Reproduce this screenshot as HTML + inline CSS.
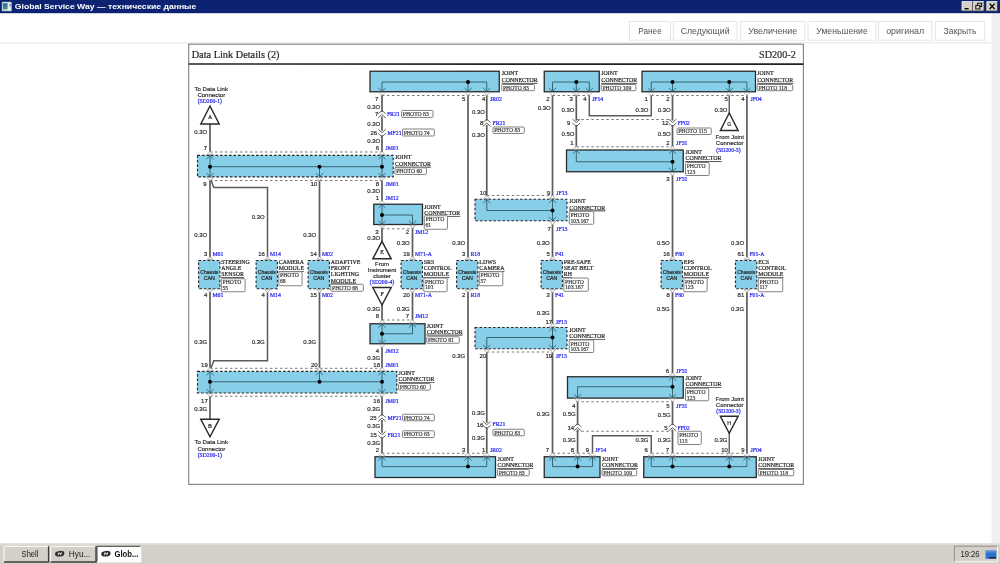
<!DOCTYPE html><html><head><meta charset="utf-8"><title>Global Service Way</title>
<style>html,body{margin:0;padding:0;background:#fff;overflow:hidden}svg{display:block}text{white-space:pre}</style></head><body>
<svg width="1000" height="564" viewBox="0 0 1000 564">
<defs><filter id="soft" filterUnits="userSpaceOnUse" x="150" y="30" width="700" height="480"><feGaussianBlur stdDeviation="0.38"/></filter><filter id="soft2" filterUnits="userSpaceOnUse" x="-20" y="-20" width="1040" height="604"><feGaussianBlur stdDeviation="0.3"/></filter></defs>
<g filter="url(#soft2)">
<rect x="-10" y="-10" width="1020" height="584" fill="#fff"/>
<rect x="991.6" y="13" width="18.4" height="530" fill="#f0f0f0"/>
<rect x="-10" y="-10" width="1020" height="23.2" fill="#0b2470"/>
<rect x="2" y="2" width="9.5" height="9" fill="#e8ece8" stroke="#8aa" stroke-width="0.5"/>
<defs><linearGradient id="ig" x1="0" y1="0" x2="0" y2="1"><stop offset="0" stop-color="#3a62b8"/><stop offset="1" stop-color="#3f9a78"/></linearGradient></defs>
<rect x="2.8" y="3.2" width="4.8" height="6.2" fill="url(#ig)"/>
<rect x="9.6" y="4" width="1" height="2.4" fill="#3a62b8"/>
<text x="14.8" y="9.0" font-family="Liberation Sans" font-size="7.6" font-weight="bold" fill="#fff" textLength="181.5" lengthAdjust="spacingAndGlyphs">Global Service Way — технические данные</text>
<rect x="962" y="1.5" width="10.6" height="9.5" fill="#d4d0c8"/>
<path d="M962,11 L962,1.5 L972.6,1.5" fill="none" stroke="#fff" stroke-width="0.7"/>
<path d="M962,11 L972.6,11 L972.6,1.5" fill="none" stroke="#404040" stroke-width="0.8"/>
<rect x="964.6" y="8" width="4" height="1.4" fill="#000"/>
<rect x="973.4" y="1.5" width="10.6" height="9.5" fill="#d4d0c8"/>
<path d="M973.4,11 L973.4,1.5 L984.0,1.5" fill="none" stroke="#fff" stroke-width="0.7"/>
<path d="M973.4,11 L984.0,11 L984.0,1.5" fill="none" stroke="#404040" stroke-width="0.8"/>
<rect x="977.6" y="3.2" width="4" height="3.4" fill="none" stroke="#000" stroke-width="0.9"/>
<rect x="975.8" y="5.4" width="4" height="3.6" fill="#d4d0c8" stroke="#000" stroke-width="0.9"/>
<rect x="986.8" y="1.5" width="10.6" height="9.5" fill="#d4d0c8"/>
<path d="M986.8,11 L986.8,1.5 L997.4,1.5" fill="none" stroke="#fff" stroke-width="0.7"/>
<path d="M986.8,11 L997.4,11 L997.4,1.5" fill="none" stroke="#404040" stroke-width="0.8"/>
<path d="M989.5999999999999,3.6 L994.5999999999999,9 M994.5999999999999,3.6 L989.5999999999999,9" stroke="#000" stroke-width="1.3"/>
<line x1="-10" y1="42.9" x2="991.6" y2="42.9" stroke="#e3e3e3" stroke-width="1"/>
<rect x="629.5" y="21.6" width="41.0" height="18.6" fill="#fff" stroke="#e2e2e2" stroke-width="0.9"/>
<text x="638.3" y="33.9" font-family="Liberation Sans" font-size="9.3" fill="#555" textLength="23.4" lengthAdjust="spacingAndGlyphs">Ранее</text>
<rect x="673.2" y="21.6" width="63.799999999999955" height="18.6" fill="#fff" stroke="#e2e2e2" stroke-width="0.9"/>
<text x="680.7" y="33.9" font-family="Liberation Sans" font-size="9.3" fill="#555" textLength="48.8" lengthAdjust="spacingAndGlyphs">Следующий</text>
<rect x="740.5" y="21.6" width="64.5" height="18.6" fill="#fff" stroke="#e2e2e2" stroke-width="0.9"/>
<text x="748.35" y="33.9" font-family="Liberation Sans" font-size="9.3" fill="#555" textLength="48.8" lengthAdjust="spacingAndGlyphs">Увеличение</text>
<rect x="808.0" y="21.6" width="68.0" height="18.6" fill="#fff" stroke="#e2e2e2" stroke-width="0.9"/>
<text x="816.3" y="33.9" font-family="Liberation Sans" font-size="9.3" fill="#555" textLength="51.4" lengthAdjust="spacingAndGlyphs">Уменьшение</text>
<rect x="878.6" y="21.6" width="53.19999999999993" height="18.6" fill="#fff" stroke="#e2e2e2" stroke-width="0.9"/>
<text x="886.2" y="33.9" font-family="Liberation Sans" font-size="9.3" fill="#555" textLength="38.0" lengthAdjust="spacingAndGlyphs">оригинал</text>
<rect x="935.2" y="21.6" width="49.5" height="18.6" fill="#fff" stroke="#e2e2e2" stroke-width="0.9"/>
<text x="943.5500000000001" y="33.9" font-family="Liberation Sans" font-size="9.3" fill="#555" textLength="32.8" lengthAdjust="spacingAndGlyphs">Закрыть</text>
<rect x="188.7" y="44.2" width="614.7" height="440.15000000000003" fill="#fff" stroke="#808080" stroke-width="1.1"/>
<line x1="188.7" y1="64.0" x2="803.4" y2="64.1" stroke="#222" stroke-width="1.7"/>
<text x="191.7" y="57.6" font-family="Liberation Serif" font-size="10.3" text-anchor="start" fill="#2a2a2a" font-weight="normal" stroke="#2a2a2a" stroke-width="0.22">Data Link Details (2)</text>
<text x="795.8" y="58.2" font-family="Liberation Serif" font-size="10.2" text-anchor="end" fill="#333" font-weight="normal" stroke="#333" stroke-width="0.22">SD200-2</text>
</g>
<g id="diagram" filter="url(#soft)">
<polyline points="210,124 210,155.5" fill="none" stroke="#5c5c5c" stroke-width="1.7" stroke-linejoin="miter"/>
<polyline points="210,177 210,260.5" fill="none" stroke="#5c5c5c" stroke-width="1.7" stroke-linejoin="miter"/>
<polyline points="210,288.75 210,371.25" fill="none" stroke="#5c5c5c" stroke-width="1.7" stroke-linejoin="miter"/>
<polyline points="210,393 210,419.5" fill="none" stroke="#5c5c5c" stroke-width="1.7" stroke-linejoin="miter"/>
<polyline points="210.3,178.2 213.75,187.5 267.5,187.5 267.5,260.5" fill="none" stroke="#5c5c5c" stroke-width="1.5" stroke-linejoin="miter"/>
<polyline points="267.5,288.75 267.5,360.75 213.75,360.75 210.3,370.0" fill="none" stroke="#5c5c5c" stroke-width="1.5" stroke-linejoin="miter"/>
<polyline points="319.5,177 319.5,260.5" fill="none" stroke="#5c5c5c" stroke-width="1.7" stroke-linejoin="miter"/>
<polyline points="319.5,288.75 319.5,371.25" fill="none" stroke="#5c5c5c" stroke-width="1.7" stroke-linejoin="miter"/>
<polyline points="382,91.75 382,155.5" fill="none" stroke="#5c5c5c" stroke-width="1.7" stroke-linejoin="miter"/>
<polyline points="382,177 382,204.25" fill="none" stroke="#5c5c5c" stroke-width="1.7" stroke-linejoin="miter"/>
<polyline points="382,224.5 382,241.5" fill="none" stroke="#5c5c5c" stroke-width="1.7" stroke-linejoin="miter"/>
<polyline points="382,305 382,323.75" fill="none" stroke="#5c5c5c" stroke-width="1.7" stroke-linejoin="miter"/>
<polyline points="382,343.75 382,371.25" fill="none" stroke="#5c5c5c" stroke-width="1.7" stroke-linejoin="miter"/>
<polyline points="382,393 382,456.75" fill="none" stroke="#5c5c5c" stroke-width="1.7" stroke-linejoin="miter"/>
<polyline points="412.5,224.5 412.5,260.5" fill="none" stroke="#5c5c5c" stroke-width="1.7" stroke-linejoin="miter"/>
<polyline points="412.5,288.75 412.5,323.75" fill="none" stroke="#5c5c5c" stroke-width="1.7" stroke-linejoin="miter"/>
<polyline points="468,91.75 468,260.5" fill="none" stroke="#5c5c5c" stroke-width="1.7" stroke-linejoin="miter"/>
<polyline points="468,288.75 468,456.75" fill="none" stroke="#5c5c5c" stroke-width="1.7" stroke-linejoin="miter"/>
<polyline points="486.75,91.75 486.75,199.25" fill="none" stroke="#5c5c5c" stroke-width="1.7" stroke-linejoin="miter"/>
<polyline points="486.75,348.75 486.75,456.75" fill="none" stroke="#5c5c5c" stroke-width="1.7" stroke-linejoin="miter"/>
<polyline points="552.5,91.75 552.5,199.25" fill="none" stroke="#5c5c5c" stroke-width="1.7" stroke-linejoin="miter"/>
<polyline points="552.5,220.75 552.5,260.5" fill="none" stroke="#5c5c5c" stroke-width="1.7" stroke-linejoin="miter"/>
<polyline points="552.5,288.75 552.5,327.5" fill="none" stroke="#5c5c5c" stroke-width="1.7" stroke-linejoin="miter"/>
<polyline points="552.5,348.75 552.5,456.75" fill="none" stroke="#5c5c5c" stroke-width="1.7" stroke-linejoin="miter"/>
<polyline points="576.3,91.75 576.3,150" fill="none" stroke="#5c5c5c" stroke-width="1.7" stroke-linejoin="miter"/>
<polyline points="577.5999999999999,398 577.5999999999999,456.75" fill="none" stroke="#5c5c5c" stroke-width="1.7" stroke-linejoin="miter"/>
<polyline points="589.3,91.75 589.3,115.75 651.25,115.75 651.25,91.75" fill="none" stroke="#5c5c5c" stroke-width="1.5" stroke-linejoin="miter"/>
<polyline points="592.5,456.75 592.5,435.75 651.25,435.75 651.25,456.75" fill="none" stroke="#5c5c5c" stroke-width="1.5" stroke-linejoin="miter"/>
<polyline points="672.5,91.75 672.5,150" fill="none" stroke="#5c5c5c" stroke-width="1.7" stroke-linejoin="miter"/>
<polyline points="672.5,171.75 672.5,260.5" fill="none" stroke="#5c5c5c" stroke-width="1.7" stroke-linejoin="miter"/>
<polyline points="672.5,288.75 672.5,376.75" fill="none" stroke="#5c5c5c" stroke-width="1.7" stroke-linejoin="miter"/>
<polyline points="672.5,398 672.5,456.75" fill="none" stroke="#5c5c5c" stroke-width="1.7" stroke-linejoin="miter"/>
<polyline points="729.25,91.75 729.25,113.5" fill="none" stroke="#5c5c5c" stroke-width="1.4" stroke-linejoin="miter"/>
<polyline points="729.25,433 729.25,456.75" fill="none" stroke="#5c5c5c" stroke-width="1.4" stroke-linejoin="miter"/>
<polyline points="746.9,91.75 746.9,260.5" fill="none" stroke="#5c5c5c" stroke-width="1.7" stroke-linejoin="miter"/>
<polyline points="746.9,288.75 746.9,456.75" fill="none" stroke="#5c5c5c" stroke-width="1.7" stroke-linejoin="miter"/>
<line x1="382" y1="95.5" x2="486.75" y2="95.5" stroke="#6a6a6a" stroke-width="0.9" stroke-dasharray="2.5 2.5"/>
<line x1="552.5" y1="95.5" x2="590.5" y2="95.5" stroke="#6a6a6a" stroke-width="0.9" stroke-dasharray="2.5 2.5"/>
<line x1="651.25" y1="95.5" x2="746.9" y2="95.5" stroke="#6a6a6a" stroke-width="0.9" stroke-dasharray="2.5 2.5"/>
<line x1="576.3" y1="119.5" x2="672.5" y2="119.5" stroke="#6a6a6a" stroke-width="0.9" stroke-dasharray="2.5 2.5"/>
<line x1="576.3" y1="146.75" x2="672.5" y2="146.75" stroke="#6a6a6a" stroke-width="0.9" stroke-dasharray="2.5 2.5"/>
<line x1="210" y1="152.0" x2="382" y2="152.0" stroke="#6a6a6a" stroke-width="0.9" stroke-dasharray="2.5 2.5"/>
<line x1="210" y1="180.5" x2="382" y2="180.5" stroke="#6a6a6a" stroke-width="0.9" stroke-dasharray="2.5 2.5"/>
<line x1="486.75" y1="195.5" x2="552.5" y2="195.5" stroke="#6a6a6a" stroke-width="0.9" stroke-dasharray="2.5 2.5"/>
<line x1="382" y1="228.75" x2="412.5" y2="228.75" stroke="#6a6a6a" stroke-width="0.9" stroke-dasharray="2.5 2.5"/>
<line x1="382" y1="320.0" x2="412.5" y2="320.0" stroke="#6a6a6a" stroke-width="0.9" stroke-dasharray="2.5 2.5"/>
<line x1="486.75" y1="352.0" x2="552.5" y2="352.0" stroke="#6a6a6a" stroke-width="0.9" stroke-dasharray="2.5 2.5"/>
<line x1="210" y1="368.3" x2="382" y2="368.3" stroke="#6a6a6a" stroke-width="0.9" stroke-dasharray="2.5 2.5"/>
<line x1="210" y1="396.25" x2="382" y2="396.25" stroke="#6a6a6a" stroke-width="0.9" stroke-dasharray="2.5 2.5"/>
<line x1="576.3" y1="401.75" x2="672.5" y2="401.75" stroke="#6a6a6a" stroke-width="0.9" stroke-dasharray="2.5 2.5"/>
<line x1="576.3" y1="431.25" x2="672.5" y2="431.25" stroke="#6a6a6a" stroke-width="0.9" stroke-dasharray="2.5 2.5"/>
<line x1="382" y1="453.25" x2="486.75" y2="453.25" stroke="#6a6a6a" stroke-width="0.9" stroke-dasharray="2.5 2.5"/>
<line x1="552.5" y1="453.25" x2="592.5" y2="453.25" stroke="#6a6a6a" stroke-width="0.9" stroke-dasharray="2.5 2.5"/>
<line x1="651.25" y1="453.25" x2="746.9" y2="453.25" stroke="#6a6a6a" stroke-width="0.9" stroke-dasharray="2.5 2.5"/>
<rect x="370" y="71.25" width="129.25" height="20.5" fill="#87cee9" stroke="#2a2a2a" stroke-width="1.3"/>
<polyline points="382,91.75 382,82 486.75,82 486.75,91.75" fill="none" stroke="#2f5a68" stroke-width="0.9"/>
<polyline points="468,82 468,91.75" fill="none" stroke="#2f5a68" stroke-width="0.9"/>
<circle cx="468" cy="82" r="2.0" fill="#000"/>
<path d="M378.4,87.95 L382,91.45 L385.6,87.95" fill="none" stroke="#2f5a68" stroke-width="0.8"/>
<path d="M378.8,92.45 L382,95.55 L385.2,92.45 Z" fill="#fff" stroke="#999" stroke-width="0.7"/>
<path d="M464.4,87.95 L468,91.45 L471.6,87.95" fill="none" stroke="#2f5a68" stroke-width="0.8"/>
<path d="M464.8,92.45 L468,95.55 L471.2,92.45 Z" fill="#fff" stroke="#999" stroke-width="0.7"/>
<path d="M483.15,87.95 L486.75,91.45 L490.35,87.95" fill="none" stroke="#2f5a68" stroke-width="0.8"/>
<path d="M483.55,92.45 L486.75,95.55 L489.95,92.45 Z" fill="#fff" stroke="#999" stroke-width="0.7"/>
<rect x="544.25" y="71.25" width="55.0" height="20.5" fill="#87cee9" stroke="#2a2a2a" stroke-width="1.3"/>
<polyline points="552.5,91.75 552.5,82 589.3,82 589.3,91.75" fill="none" stroke="#2f5a68" stroke-width="0.9"/>
<polyline points="576.3,82 576.3,91.75" fill="none" stroke="#2f5a68" stroke-width="0.9"/>
<circle cx="576.3" cy="82" r="2.0" fill="#000"/>
<path d="M548.9,87.95 L552.5,91.45 L556.1,87.95" fill="none" stroke="#2f5a68" stroke-width="0.8"/>
<path d="M549.3,92.45 L552.5,95.55 L555.7,92.45 Z" fill="#fff" stroke="#999" stroke-width="0.7"/>
<path d="M572.6999999999999,87.95 L576.3,91.45 L579.9,87.95" fill="none" stroke="#2f5a68" stroke-width="0.8"/>
<path d="M573.0999999999999,92.45 L576.3,95.55 L579.5,92.45 Z" fill="#fff" stroke="#999" stroke-width="0.7"/>
<path d="M585.6999999999999,87.95 L589.3,91.45 L592.9,87.95" fill="none" stroke="#2f5a68" stroke-width="0.8"/>
<path d="M586.0999999999999,92.45 L589.3,95.55 L592.5,92.45 Z" fill="#fff" stroke="#999" stroke-width="0.7"/>
<rect x="642" y="71.25" width="113.5" height="20.5" fill="#87cee9" stroke="#2a2a2a" stroke-width="1.3"/>
<polyline points="651.25,91.75 651.25,82 746.9,82 746.9,91.75" fill="none" stroke="#2f5a68" stroke-width="0.9"/>
<polyline points="672.5,82 672.5,91.75" fill="none" stroke="#2f5a68" stroke-width="0.9"/>
<polyline points="729.25,82 729.25,91.75" fill="none" stroke="#2f5a68" stroke-width="0.9"/>
<circle cx="672.5" cy="82" r="2.0" fill="#000"/>
<circle cx="729.25" cy="82" r="2.0" fill="#000"/>
<path d="M647.65,87.95 L651.25,91.45 L654.85,87.95" fill="none" stroke="#2f5a68" stroke-width="0.8"/>
<path d="M648.05,92.45 L651.25,95.55 L654.45,92.45 Z" fill="#fff" stroke="#999" stroke-width="0.7"/>
<path d="M668.9,87.95 L672.5,91.45 L676.1,87.95" fill="none" stroke="#2f5a68" stroke-width="0.8"/>
<path d="M669.3,92.45 L672.5,95.55 L675.7,92.45 Z" fill="#fff" stroke="#999" stroke-width="0.7"/>
<path d="M725.65,87.95 L729.25,91.45 L732.85,87.95" fill="none" stroke="#2f5a68" stroke-width="0.8"/>
<path d="M726.05,92.45 L729.25,95.55 L732.45,92.45 Z" fill="#fff" stroke="#999" stroke-width="0.7"/>
<path d="M743.3,87.95 L746.9,91.45 L750.5,87.95" fill="none" stroke="#2f5a68" stroke-width="0.8"/>
<path d="M743.6999999999999,92.45 L746.9,95.55 L750.1,92.45 Z" fill="#fff" stroke="#999" stroke-width="0.7"/>
<rect x="375" y="456.75" width="120.5" height="20.75" fill="#87cee9" stroke="#2a2a2a" stroke-width="1.3"/>
<polyline points="382,456.75 382,466.6 486.75,466.6 486.75,456.75" fill="none" stroke="#2f5a68" stroke-width="0.9"/>
<polyline points="468,466.6 468,456.75" fill="none" stroke="#2f5a68" stroke-width="0.9"/>
<circle cx="468" cy="466.6" r="2.0" fill="#000"/>
<path d="M378.4,460.55 L382,457.05 L385.6,460.55" fill="none" stroke="#2f5a68" stroke-width="0.8"/>
<path d="M378.8,456.05 L382,452.95 L385.2,456.05 Z" fill="#fff" stroke="#999" stroke-width="0.7"/>
<path d="M464.4,460.55 L468,457.05 L471.6,460.55" fill="none" stroke="#2f5a68" stroke-width="0.8"/>
<path d="M464.8,456.05 L468,452.95 L471.2,456.05 Z" fill="#fff" stroke="#999" stroke-width="0.7"/>
<path d="M483.15,460.55 L486.75,457.05 L490.35,460.55" fill="none" stroke="#2f5a68" stroke-width="0.8"/>
<path d="M483.55,456.05 L486.75,452.95 L489.95,456.05 Z" fill="#fff" stroke="#999" stroke-width="0.7"/>
<rect x="544.25" y="456.75" width="55.75" height="20.75" fill="#87cee9" stroke="#2a2a2a" stroke-width="1.3"/>
<polyline points="552.5,456.75 552.5,466.6 592.5,466.6 592.5,456.75" fill="none" stroke="#2f5a68" stroke-width="0.9"/>
<polyline points="577.5999999999999,466.6 577.5999999999999,456.75" fill="none" stroke="#2f5a68" stroke-width="0.9"/>
<circle cx="577.5999999999999" cy="466.6" r="2.0" fill="#000"/>
<path d="M548.9,460.55 L552.5,457.05 L556.1,460.55" fill="none" stroke="#2f5a68" stroke-width="0.8"/>
<path d="M549.3,456.05 L552.5,452.95 L555.7,456.05 Z" fill="#fff" stroke="#999" stroke-width="0.7"/>
<path d="M573.9999999999999,460.55 L577.5999999999999,457.05 L581.1999999999999,460.55" fill="none" stroke="#2f5a68" stroke-width="0.8"/>
<path d="M574.3999999999999,456.05 L577.5999999999999,452.95 L580.8,456.05 Z" fill="#fff" stroke="#999" stroke-width="0.7"/>
<path d="M588.9,460.55 L592.5,457.05 L596.1,460.55" fill="none" stroke="#2f5a68" stroke-width="0.8"/>
<path d="M589.3,456.05 L592.5,452.95 L595.7,456.05 Z" fill="#fff" stroke="#999" stroke-width="0.7"/>
<rect x="643.75" y="456.75" width="112.5" height="20.75" fill="#87cee9" stroke="#2a2a2a" stroke-width="1.3"/>
<polyline points="651.25,456.75 651.25,466.6 746.9,466.6 746.9,456.75" fill="none" stroke="#2f5a68" stroke-width="0.9"/>
<polyline points="672.5,466.6 672.5,456.75" fill="none" stroke="#2f5a68" stroke-width="0.9"/>
<polyline points="729.25,466.6 729.25,456.75" fill="none" stroke="#2f5a68" stroke-width="0.9"/>
<circle cx="672.5" cy="466.6" r="2.0" fill="#000"/>
<circle cx="729.25" cy="466.6" r="2.0" fill="#000"/>
<path d="M647.65,460.55 L651.25,457.05 L654.85,460.55" fill="none" stroke="#2f5a68" stroke-width="0.8"/>
<path d="M648.05,456.05 L651.25,452.95 L654.45,456.05 Z" fill="#fff" stroke="#999" stroke-width="0.7"/>
<path d="M668.9,460.55 L672.5,457.05 L676.1,460.55" fill="none" stroke="#2f5a68" stroke-width="0.8"/>
<path d="M669.3,456.05 L672.5,452.95 L675.7,456.05 Z" fill="#fff" stroke="#999" stroke-width="0.7"/>
<path d="M725.65,460.55 L729.25,457.05 L732.85,460.55" fill="none" stroke="#2f5a68" stroke-width="0.8"/>
<path d="M726.05,456.05 L729.25,452.95 L732.45,456.05 Z" fill="#fff" stroke="#999" stroke-width="0.7"/>
<path d="M743.3,460.55 L746.9,457.05 L750.5,460.55" fill="none" stroke="#2f5a68" stroke-width="0.8"/>
<path d="M743.6999999999999,456.05 L746.9,452.95 L750.1,456.05 Z" fill="#fff" stroke="#999" stroke-width="0.7"/>
<rect x="197.5" y="155.3" width="195.7" height="21.599999999999994" fill="#87cee9" stroke="#2a2a2a" stroke-width="1.15" stroke-dasharray="2.6 1.9"/>
<polyline points="210,166.7 382,166.7" fill="none" stroke="#2f5a68" stroke-width="0.9"/>
<polyline points="210,155.3 210,176.9" fill="none" stroke="#2f5a68" stroke-width="0.9"/>
<polyline points="382,155.3 382,176.9" fill="none" stroke="#2f5a68" stroke-width="0.9"/>
<polyline points="319.5,166.7 319.5,176.9" fill="none" stroke="#2f5a68" stroke-width="0.9"/>
<path d="M315.9,173.1 L319.5,176.6 L323.1,173.1" fill="none" stroke="#2f5a68" stroke-width="0.8"/>
<path d="M316.3,177.6 L319.5,180.70000000000002 L322.7,177.6 Z" fill="#fff" stroke="#999" stroke-width="0.7"/>
<circle cx="210" cy="166.7" r="2.0" fill="#000"/>
<circle cx="319.5" cy="166.7" r="2.0" fill="#000"/>
<circle cx="382" cy="166.7" r="2.0" fill="#000"/>
<path d="M206.4,159.10000000000002 L210,155.60000000000002 L213.6,159.10000000000002" fill="none" stroke="#2f5a68" stroke-width="0.8"/>
<path d="M206.8,154.60000000000002 L210,151.5 L213.2,154.60000000000002 Z" fill="#fff" stroke="#999" stroke-width="0.7"/>
<path d="M378.4,159.10000000000002 L382,155.60000000000002 L385.6,159.10000000000002" fill="none" stroke="#2f5a68" stroke-width="0.8"/>
<path d="M378.8,154.60000000000002 L382,151.5 L385.2,154.60000000000002 Z" fill="#fff" stroke="#999" stroke-width="0.7"/>
<path d="M206.4,173.1 L210,176.6 L213.6,173.1" fill="none" stroke="#2f5a68" stroke-width="0.8"/>
<path d="M206.8,177.6 L210,180.70000000000002 L213.2,177.6 Z" fill="#fff" stroke="#999" stroke-width="0.7"/>
<path d="M378.4,173.1 L382,176.6 L385.6,173.1" fill="none" stroke="#2f5a68" stroke-width="0.8"/>
<path d="M378.8,177.6 L382,180.70000000000002 L385.2,177.6 Z" fill="#fff" stroke="#999" stroke-width="0.7"/>
<rect x="197.5" y="371.4" width="199.3" height="21.600000000000023" fill="#87cee9" stroke="#2a2a2a" stroke-width="1.15" stroke-dasharray="2.6 1.9"/>
<polyline points="210,381.8 382,381.8" fill="none" stroke="#2f5a68" stroke-width="0.9"/>
<polyline points="210,371.4 210,393.0" fill="none" stroke="#2f5a68" stroke-width="0.9"/>
<polyline points="382,371.4 382,393.0" fill="none" stroke="#2f5a68" stroke-width="0.9"/>
<polyline points="319.5,371.4 319.5,381.8" fill="none" stroke="#2f5a68" stroke-width="0.9"/>
<path d="M315.9,375.2 L319.5,371.7 L323.1,375.2" fill="none" stroke="#2f5a68" stroke-width="0.8"/>
<path d="M316.3,370.7 L319.5,367.59999999999997 L322.7,370.7 Z" fill="#fff" stroke="#999" stroke-width="0.7"/>
<circle cx="210" cy="381.8" r="2.0" fill="#000"/>
<circle cx="319.5" cy="381.8" r="2.0" fill="#000"/>
<circle cx="382" cy="381.8" r="2.0" fill="#000"/>
<path d="M206.4,375.2 L210,371.7 L213.6,375.2" fill="none" stroke="#2f5a68" stroke-width="0.8"/>
<path d="M206.8,370.7 L210,367.59999999999997 L213.2,370.7 Z" fill="#fff" stroke="#999" stroke-width="0.7"/>
<path d="M378.4,375.2 L382,371.7 L385.6,375.2" fill="none" stroke="#2f5a68" stroke-width="0.8"/>
<path d="M378.8,370.7 L382,367.59999999999997 L385.2,370.7 Z" fill="#fff" stroke="#999" stroke-width="0.7"/>
<path d="M206.4,389.2 L210,392.7 L213.6,389.2" fill="none" stroke="#2f5a68" stroke-width="0.8"/>
<path d="M206.8,393.7 L210,396.8 L213.2,393.7 Z" fill="#fff" stroke="#999" stroke-width="0.7"/>
<path d="M378.4,389.2 L382,392.7 L385.6,389.2" fill="none" stroke="#2f5a68" stroke-width="0.8"/>
<path d="M378.8,393.7 L382,396.8 L385.2,393.7 Z" fill="#fff" stroke="#999" stroke-width="0.7"/>
<rect x="373.75" y="204.25" width="48.75" height="20.25" fill="#87cee9" stroke="#2a2a2a" stroke-width="1.3"/>
<polyline points="382,204.25 382,224.5" fill="none" stroke="#2f5a68" stroke-width="0.9"/>
<polyline points="382,215 412.5,215 412.5,224.5" fill="none" stroke="#2f5a68" stroke-width="0.9"/>
<circle cx="382" cy="215" r="2.0" fill="#000"/>
<path d="M378.4,208.05 L382,204.55 L385.6,208.05" fill="none" stroke="#2f5a68" stroke-width="0.8"/>
<path d="M378.8,203.55 L382,200.45 L385.2,203.55 Z" fill="#fff" stroke="#999" stroke-width="0.7"/>
<path d="M378.4,220.7 L382,224.2 L385.6,220.7" fill="none" stroke="#2f5a68" stroke-width="0.8"/>
<path d="M378.8,225.2 L382,228.3 L385.2,225.2 Z" fill="#fff" stroke="#999" stroke-width="0.7"/>
<path d="M408.9,220.7 L412.5,224.2 L416.1,220.7" fill="none" stroke="#2f5a68" stroke-width="0.8"/>
<path d="M409.3,225.2 L412.5,228.3 L415.7,225.2 Z" fill="#fff" stroke="#999" stroke-width="0.7"/>
<rect x="370" y="323.75" width="55" height="20.0" fill="#87cee9" stroke="#2a2a2a" stroke-width="1.3"/>
<polyline points="382,323.75 382,343.75" fill="none" stroke="#2f5a68" stroke-width="0.9"/>
<polyline points="382,333.75 412.5,333.75 412.5,323.75" fill="none" stroke="#2f5a68" stroke-width="0.9"/>
<circle cx="382" cy="333.75" r="2.0" fill="#000"/>
<path d="M378.4,327.55 L382,324.05 L385.6,327.55" fill="none" stroke="#2f5a68" stroke-width="0.8"/>
<path d="M378.8,323.05 L382,319.95 L385.2,323.05 Z" fill="#fff" stroke="#999" stroke-width="0.7"/>
<path d="M378.4,339.95 L382,343.45 L385.6,339.95" fill="none" stroke="#2f5a68" stroke-width="0.8"/>
<path d="M378.8,344.45 L382,347.55 L385.2,344.45 Z" fill="#fff" stroke="#999" stroke-width="0.7"/>
<path d="M408.9,327.55 L412.5,324.05 L416.1,327.55" fill="none" stroke="#2f5a68" stroke-width="0.8"/>
<path d="M409.3,323.05 L412.5,319.95 L415.7,323.05 Z" fill="#fff" stroke="#999" stroke-width="0.7"/>
<rect x="475" y="199.25" width="92" height="21.5" fill="#87cee9" stroke="#2a2a2a" stroke-width="1.15" stroke-dasharray="2.6 1.9"/>
<polyline points="486.75,199.25 486.75,210.5 552.5,210.5" fill="none" stroke="#2f5a68" stroke-width="0.9"/>
<polyline points="552.5,199.25 552.5,220.75" fill="none" stroke="#2f5a68" stroke-width="0.9"/>
<circle cx="552.5" cy="210.6" r="2.0" fill="#000"/>
<path d="M483.15,203.05 L486.75,199.55 L490.35,203.05" fill="none" stroke="#2f5a68" stroke-width="0.8"/>
<path d="M483.55,198.55 L486.75,195.45 L489.95,198.55 Z" fill="#fff" stroke="#999" stroke-width="0.7"/>
<path d="M548.9,203.05 L552.5,199.55 L556.1,203.05" fill="none" stroke="#2f5a68" stroke-width="0.8"/>
<path d="M549.3,198.55 L552.5,195.45 L555.7,198.55 Z" fill="#fff" stroke="#999" stroke-width="0.7"/>
<path d="M548.9,216.95 L552.5,220.45 L556.1,216.95" fill="none" stroke="#2f5a68" stroke-width="0.8"/>
<path d="M549.3,221.45 L552.5,224.55 L555.7,221.45 Z" fill="#fff" stroke="#999" stroke-width="0.7"/>
<rect x="475" y="327.5" width="92" height="21.25" fill="#87cee9" stroke="#2a2a2a" stroke-width="1.15" stroke-dasharray="2.6 1.9"/>
<polyline points="486.75,348.75 486.75,337.5 552.5,337.5" fill="none" stroke="#2f5a68" stroke-width="0.9"/>
<polyline points="552.5,327.5 552.5,348.75" fill="none" stroke="#2f5a68" stroke-width="0.9"/>
<circle cx="552.5" cy="337.5" r="2.0" fill="#000"/>
<path d="M483.15,344.95 L486.75,348.45 L490.35,344.95" fill="none" stroke="#2f5a68" stroke-width="0.8"/>
<path d="M483.55,349.45 L486.75,352.55 L489.95,349.45 Z" fill="#fff" stroke="#999" stroke-width="0.7"/>
<path d="M548.9,344.95 L552.5,348.45 L556.1,344.95" fill="none" stroke="#2f5a68" stroke-width="0.8"/>
<path d="M549.3,349.45 L552.5,352.55 L555.7,349.45 Z" fill="#fff" stroke="#999" stroke-width="0.7"/>
<path d="M548.9,331.3 L552.5,327.8 L556.1,331.3" fill="none" stroke="#2f5a68" stroke-width="0.8"/>
<path d="M549.3,326.8 L552.5,323.7 L555.7,326.8 Z" fill="#fff" stroke="#999" stroke-width="0.7"/>
<rect x="566.5" y="150" width="116.75" height="21.75" fill="#87cee9" stroke="#2a2a2a" stroke-width="1.3"/>
<polyline points="576.3,150 576.3,161.75 672.5,161.75" fill="none" stroke="#2f5a68" stroke-width="0.9"/>
<polyline points="672.5,150 672.5,171.75" fill="none" stroke="#2f5a68" stroke-width="0.9"/>
<circle cx="672.5" cy="161.75" r="2.0" fill="#000"/>
<path d="M572.6999999999999,153.8 L576.3,150.3 L579.9,153.8" fill="none" stroke="#2f5a68" stroke-width="0.8"/>
<path d="M573.0999999999999,149.3 L576.3,146.2 L579.5,149.3 Z" fill="#fff" stroke="#999" stroke-width="0.7"/>
<path d="M668.9,153.8 L672.5,150.3 L676.1,153.8" fill="none" stroke="#2f5a68" stroke-width="0.8"/>
<path d="M669.3,149.3 L672.5,146.2 L675.7,149.3 Z" fill="#fff" stroke="#999" stroke-width="0.7"/>
<path d="M668.9,167.95 L672.5,171.45 L676.1,167.95" fill="none" stroke="#2f5a68" stroke-width="0.8"/>
<path d="M669.3,172.45 L672.5,175.55 L675.7,172.45 Z" fill="#fff" stroke="#999" stroke-width="0.7"/>
<rect x="567.5" y="376.75" width="115.75" height="21.350000000000023" fill="#87cee9" stroke="#2a2a2a" stroke-width="1.3"/>
<polyline points="577.5999999999999,398 577.5999999999999,386.75 672.5,386.75" fill="none" stroke="#2f5a68" stroke-width="0.9"/>
<polyline points="672.5,376.75 672.5,398" fill="none" stroke="#2f5a68" stroke-width="0.9"/>
<circle cx="672.5" cy="386.75" r="2.0" fill="#000"/>
<path d="M573.9999999999999,394.2 L577.5999999999999,397.7 L581.1999999999999,394.2" fill="none" stroke="#2f5a68" stroke-width="0.8"/>
<path d="M574.3999999999999,398.7 L577.5999999999999,401.8 L580.8,398.7 Z" fill="#fff" stroke="#999" stroke-width="0.7"/>
<path d="M668.9,394.2 L672.5,397.7 L676.1,394.2" fill="none" stroke="#2f5a68" stroke-width="0.8"/>
<path d="M669.3,398.7 L672.5,401.8 L675.7,398.7 Z" fill="#fff" stroke="#999" stroke-width="0.7"/>
<path d="M668.9,380.55 L672.5,377.05 L676.1,380.55" fill="none" stroke="#2f5a68" stroke-width="0.8"/>
<path d="M669.3,376.05 L672.5,372.95 L675.7,376.05 Z" fill="#fff" stroke="#999" stroke-width="0.7"/>
<rect x="380.4" y="112.0" width="3.2" height="4.4" fill="#fff"/>
<path d="M378.2,113.9 L382,110.5 L385.8,113.9" fill="none" stroke="#555" stroke-width="0.9"/>
<path d="M378.2,117.9 L382,114.5 L385.8,117.9" fill="none" stroke="#555" stroke-width="0.9"/>
<rect x="380.4" y="130.8" width="3.2" height="4.4" fill="#fff"/>
<path d="M378.2,129.3 L382,132.7 L385.8,129.3" fill="none" stroke="#555" stroke-width="0.9"/>
<path d="M378.2,133.3 L382,136.7 L385.8,133.3" fill="none" stroke="#555" stroke-width="0.9"/>
<rect x="485.15" y="120.6" width="3.2" height="4.4" fill="#fff"/>
<path d="M482.95,122.5 L486.75,119.1 L490.55,122.5" fill="none" stroke="#555" stroke-width="0.9"/>
<path d="M482.95,126.5 L486.75,123.1 L490.55,126.5" fill="none" stroke="#555" stroke-width="0.9"/>
<rect x="574.6999999999999" y="120.6" width="3.2" height="4.4" fill="#fff"/>
<path d="M572.5,119.1 L576.3,122.5 L580.0999999999999,119.1" fill="none" stroke="#555" stroke-width="0.9"/>
<path d="M572.5,123.1 L576.3,126.5 L580.0999999999999,123.1" fill="none" stroke="#555" stroke-width="0.9"/>
<rect x="670.9" y="120.6" width="3.2" height="4.4" fill="#fff"/>
<path d="M668.7,119.1 L672.5,122.5 L676.3,119.1" fill="none" stroke="#555" stroke-width="0.9"/>
<path d="M668.7,123.1 L672.5,126.5 L676.3,123.1" fill="none" stroke="#555" stroke-width="0.9"/>
<rect x="380.4" y="415.6" width="3.2" height="4.4" fill="#fff"/>
<path d="M378.2,417.5 L382,414.1 L385.8,417.5" fill="none" stroke="#555" stroke-width="0.9"/>
<path d="M378.2,421.5 L382,418.1 L385.8,421.5" fill="none" stroke="#555" stroke-width="0.9"/>
<rect x="380.4" y="432.8" width="3.2" height="4.4" fill="#fff"/>
<path d="M378.2,431.3 L382,434.7 L385.8,431.3" fill="none" stroke="#555" stroke-width="0.9"/>
<path d="M378.2,435.3 L382,438.7 L385.8,435.3" fill="none" stroke="#555" stroke-width="0.9"/>
<rect x="485.15" y="422.8" width="3.2" height="4.4" fill="#fff"/>
<path d="M482.95,421.3 L486.75,424.7 L490.55,421.3" fill="none" stroke="#555" stroke-width="0.9"/>
<path d="M482.95,425.3 L486.75,428.7 L490.55,425.3" fill="none" stroke="#555" stroke-width="0.9"/>
<rect x="575.9999999999999" y="425.1" width="3.2" height="4.4" fill="#fff"/>
<path d="M573.8,427.0 L577.5999999999999,423.6 L581.3999999999999,427.0" fill="none" stroke="#555" stroke-width="0.9"/>
<path d="M573.8,431.0 L577.5999999999999,427.6 L581.3999999999999,431.0" fill="none" stroke="#555" stroke-width="0.9"/>
<rect x="670.9" y="425.1" width="3.2" height="4.4" fill="#fff"/>
<path d="M668.7,427.0 L672.5,423.6 L676.3,427.0" fill="none" stroke="#555" stroke-width="0.9"/>
<path d="M668.7,431.0 L672.5,427.6 L676.3,431.0" fill="none" stroke="#555" stroke-width="0.9"/>
<path d="M210,106 L219.2,124 L200.8,124 Z" fill="#fff" stroke="#2a2a2a" stroke-width="1.45"/>
<text x="210" y="119.25999999999999" font-family="Liberation Serif" font-size="5.8" text-anchor="middle" fill="#222" font-weight="normal" stroke="#222" stroke-width="0.22">A</text>
<path d="M200.8,419.3 L219.2,419.3 L210,436.8 Z" fill="#fff" stroke="#2a2a2a" stroke-width="1.45"/>
<text x="210" y="427.70000000000005" font-family="Liberation Serif" font-size="5.8" text-anchor="middle" fill="#222" font-weight="normal" stroke="#222" stroke-width="0.22">B</text>
<path d="M382,241.3 L391.2,258.8 L372.8,258.8 Z" fill="#fff" stroke="#2a2a2a" stroke-width="1.45"/>
<text x="382" y="254.25" font-family="Liberation Serif" font-size="5.8" text-anchor="middle" fill="#222" font-weight="normal" stroke="#222" stroke-width="0.22">E</text>
<path d="M372.8,287.5 L391.2,287.5 L382,305 Z" fill="#fff" stroke="#2a2a2a" stroke-width="1.45"/>
<text x="382" y="295.90000000000003" font-family="Liberation Serif" font-size="5.8" text-anchor="middle" fill="#222" font-weight="normal" stroke="#222" stroke-width="0.22">F</text>
<path d="M729.25,113 L738.15,130.5 L720.35,130.5 Z" fill="#fff" stroke="#2a2a2a" stroke-width="1.45"/>
<text x="729.25" y="125.94999999999999" font-family="Liberation Sans" font-size="5.3" text-anchor="middle" fill="#222" font-weight="normal" stroke="#222" stroke-width="0.18">G</text>
<path d="M720.35,416.3 L738.15,416.3 L729.25,433.3 Z" fill="#fff" stroke="#2a2a2a" stroke-width="1.45"/>
<text x="729.25" y="424.52000000000004" font-family="Liberation Sans" font-size="5.3" text-anchor="middle" fill="#222" font-weight="normal" stroke="#222" stroke-width="0.18">H</text>
<rect x="198.6" y="260.5" width="21.30000000000001" height="28.25" fill="#87cee9" stroke="#2a2a2a" stroke-width="1.15" stroke-dasharray="2.6 1.9"/>
<path d="M207,259.6 L210,256.8 L213,259.6 Z" fill="#fff" stroke="#999" stroke-width="0.7"/>
<path d="M207,289.6 L210,292.4 L213,289.6 Z" fill="#fff" stroke="#999" stroke-width="0.7"/>
<text x="209.3" y="274.0" font-family="Liberation Sans" font-size="5.1" text-anchor="middle" fill="#222" font-weight="normal" stroke="#222" stroke-width="0.18">Chassis</text>
<text x="209.3" y="279.6" font-family="Liberation Sans" font-size="5.3" text-anchor="middle" fill="#222" font-weight="normal" stroke="#222" stroke-width="0.18">CAN</text>
<text x="207.4" y="256.4" font-family="Liberation Sans" font-size="6.0" text-anchor="end" fill="#2a2a2a" font-weight="normal" stroke="#2a2a2a" stroke-width="0.18">3</text>
<text x="212.5" y="256.4" font-family="Liberation Serif" font-size="5.75" text-anchor="start" fill="#2a2af0" font-weight="normal" stroke="#2a2af0" stroke-width="0.22">M61</text>
<text x="207.4" y="297.2" font-family="Liberation Sans" font-size="6.0" text-anchor="end" fill="#2a2a2a" font-weight="normal" stroke="#2a2a2a" stroke-width="0.18">4</text>
<text x="212.5" y="297.4" font-family="Liberation Serif" font-size="5.75" text-anchor="start" fill="#2a2af0" font-weight="normal" stroke="#2a2af0" stroke-width="0.22">M61</text>
<text x="221.3" y="264.1" font-family="Liberation Serif" font-size="5.9" text-anchor="start" fill="#2a2a2a" font-weight="normal" stroke="#2a2a2a" stroke-width="0.22">STEERING</text>
<text x="221.3" y="270.25" font-family="Liberation Serif" font-size="5.9" text-anchor="start" fill="#2a2a2a" font-weight="normal" stroke="#2a2a2a" stroke-width="0.22">ANGLE</text>
<text x="221.3" y="276.40000000000003" font-family="Liberation Serif" font-size="5.9" text-anchor="start" fill="#2a2a2a" font-weight="normal" stroke="#2a2a2a" stroke-width="0.22" text-decoration="underline">SENSOR</text>
<rect x="221.3" y="278.75" width="23.80000000000001" height="13.0" rx="0.9" fill="#fff" stroke="#808080" stroke-width="1.0"/>
<text x="222.5" y="284.35" font-family="Liberation Serif" font-size="5.7" text-anchor="start" fill="#444" font-weight="normal" stroke="#444" stroke-width="0.22">PHOTO</text>
<text x="222.5" y="290.15" font-family="Liberation Serif" font-size="5.7" text-anchor="start" fill="#444" font-weight="normal" stroke="#444" stroke-width="0.22">55</text>
<rect x="256.1" y="260.5" width="21.30000000000001" height="28.25" fill="#87cee9" stroke="#2a2a2a" stroke-width="1.15" stroke-dasharray="2.6 1.9"/>
<path d="M264.5,259.6 L267.5,256.8 L270.5,259.6 Z" fill="#fff" stroke="#999" stroke-width="0.7"/>
<path d="M264.5,289.6 L267.5,292.4 L270.5,289.6 Z" fill="#fff" stroke="#999" stroke-width="0.7"/>
<text x="266.8" y="274.0" font-family="Liberation Sans" font-size="5.1" text-anchor="middle" fill="#222" font-weight="normal" stroke="#222" stroke-width="0.18">Chassis</text>
<text x="266.8" y="279.6" font-family="Liberation Sans" font-size="5.3" text-anchor="middle" fill="#222" font-weight="normal" stroke="#222" stroke-width="0.18">CAN</text>
<text x="264.9" y="256.4" font-family="Liberation Sans" font-size="6.0" text-anchor="end" fill="#2a2a2a" font-weight="normal" stroke="#2a2a2a" stroke-width="0.18">16</text>
<text x="270.0" y="256.4" font-family="Liberation Serif" font-size="5.75" text-anchor="start" fill="#2a2af0" font-weight="normal" stroke="#2a2af0" stroke-width="0.22">M14</text>
<text x="264.9" y="297.2" font-family="Liberation Sans" font-size="6.0" text-anchor="end" fill="#2a2a2a" font-weight="normal" stroke="#2a2a2a" stroke-width="0.18">4</text>
<text x="270.0" y="297.4" font-family="Liberation Serif" font-size="5.75" text-anchor="start" fill="#2a2af0" font-weight="normal" stroke="#2a2af0" stroke-width="0.22">M14</text>
<text x="278.8" y="264.1" font-family="Liberation Serif" font-size="5.9" text-anchor="start" fill="#2a2a2a" font-weight="normal" stroke="#2a2a2a" stroke-width="0.22">CAMERA</text>
<text x="278.8" y="270.25" font-family="Liberation Serif" font-size="5.9" text-anchor="start" fill="#2a2a2a" font-weight="normal" stroke="#2a2a2a" stroke-width="0.22" text-decoration="underline">MODULE</text>
<rect x="278.8" y="271.75" width="23.30000000000001" height="14.0" rx="0.9" fill="#fff" stroke="#808080" stroke-width="1.0"/>
<text x="280.0" y="277.35" font-family="Liberation Serif" font-size="5.7" text-anchor="start" fill="#444" font-weight="normal" stroke="#444" stroke-width="0.22">PHOTO</text>
<text x="280.0" y="283.15" font-family="Liberation Serif" font-size="5.7" text-anchor="start" fill="#444" font-weight="normal" stroke="#444" stroke-width="0.22">68</text>
<rect x="308.1" y="260.5" width="21.30000000000001" height="28.25" fill="#87cee9" stroke="#2a2a2a" stroke-width="1.15" stroke-dasharray="2.6 1.9"/>
<path d="M316.5,259.6 L319.5,256.8 L322.5,259.6 Z" fill="#fff" stroke="#999" stroke-width="0.7"/>
<path d="M316.5,289.6 L319.5,292.4 L322.5,289.6 Z" fill="#fff" stroke="#999" stroke-width="0.7"/>
<text x="318.8" y="274.0" font-family="Liberation Sans" font-size="5.1" text-anchor="middle" fill="#222" font-weight="normal" stroke="#222" stroke-width="0.18">Chassis</text>
<text x="318.8" y="279.6" font-family="Liberation Sans" font-size="5.3" text-anchor="middle" fill="#222" font-weight="normal" stroke="#222" stroke-width="0.18">CAN</text>
<text x="316.9" y="256.4" font-family="Liberation Sans" font-size="6.0" text-anchor="end" fill="#2a2a2a" font-weight="normal" stroke="#2a2a2a" stroke-width="0.18">14</text>
<text x="322.0" y="256.4" font-family="Liberation Serif" font-size="5.75" text-anchor="start" fill="#2a2af0" font-weight="normal" stroke="#2a2af0" stroke-width="0.22">M02</text>
<text x="316.9" y="297.2" font-family="Liberation Sans" font-size="6.0" text-anchor="end" fill="#2a2a2a" font-weight="normal" stroke="#2a2a2a" stroke-width="0.18">15</text>
<text x="322.0" y="297.4" font-family="Liberation Serif" font-size="5.75" text-anchor="start" fill="#2a2af0" font-weight="normal" stroke="#2a2af0" stroke-width="0.22">M02</text>
<text x="330.8" y="264.1" font-family="Liberation Serif" font-size="5.9" text-anchor="start" fill="#2a2a2a" font-weight="normal" stroke="#2a2a2a" stroke-width="0.22">ADAPTIVE</text>
<text x="330.8" y="270.25" font-family="Liberation Serif" font-size="5.9" text-anchor="start" fill="#2a2a2a" font-weight="normal" stroke="#2a2a2a" stroke-width="0.22">FRONT</text>
<text x="330.8" y="276.40000000000003" font-family="Liberation Serif" font-size="5.9" text-anchor="start" fill="#2a2a2a" font-weight="normal" stroke="#2a2a2a" stroke-width="0.22">LIGHTING</text>
<text x="330.8" y="282.55" font-family="Liberation Serif" font-size="5.9" text-anchor="start" fill="#2a2a2a" font-weight="normal" stroke="#2a2a2a" stroke-width="0.22" text-decoration="underline">MODULE</text>
<rect x="330.8" y="284.25" width="32.5" height="7.0" rx="0.9" fill="#fff" stroke="#808080" stroke-width="1.0"/>
<text x="332.0" y="289.75" font-family="Liberation Serif" font-size="5.7" text-anchor="start" fill="#444" font-weight="normal" stroke="#444" stroke-width="0.22">PHOTO 68</text>
<rect x="401.1" y="260.5" width="21.30000000000001" height="28.25" fill="#87cee9" stroke="#2a2a2a" stroke-width="1.15" stroke-dasharray="2.6 1.9"/>
<path d="M409.5,259.6 L412.5,256.8 L415.5,259.6 Z" fill="#fff" stroke="#999" stroke-width="0.7"/>
<path d="M409.5,289.6 L412.5,292.4 L415.5,289.6 Z" fill="#fff" stroke="#999" stroke-width="0.7"/>
<text x="411.8" y="274.0" font-family="Liberation Sans" font-size="5.1" text-anchor="middle" fill="#222" font-weight="normal" stroke="#222" stroke-width="0.18">Chassis</text>
<text x="411.8" y="279.6" font-family="Liberation Sans" font-size="5.3" text-anchor="middle" fill="#222" font-weight="normal" stroke="#222" stroke-width="0.18">CAN</text>
<text x="409.9" y="256.4" font-family="Liberation Sans" font-size="6.0" text-anchor="end" fill="#2a2a2a" font-weight="normal" stroke="#2a2a2a" stroke-width="0.18">19</text>
<text x="415.0" y="256.4" font-family="Liberation Serif" font-size="5.75" text-anchor="start" fill="#2a2af0" font-weight="normal" stroke="#2a2af0" stroke-width="0.22">M71-A</text>
<text x="409.9" y="297.2" font-family="Liberation Sans" font-size="6.0" text-anchor="end" fill="#2a2a2a" font-weight="normal" stroke="#2a2a2a" stroke-width="0.18">20</text>
<text x="415.0" y="297.4" font-family="Liberation Serif" font-size="5.75" text-anchor="start" fill="#2a2af0" font-weight="normal" stroke="#2a2af0" stroke-width="0.22">M71-A</text>
<text x="423.8" y="264.1" font-family="Liberation Serif" font-size="5.9" text-anchor="start" fill="#2a2a2a" font-weight="normal" stroke="#2a2a2a" stroke-width="0.22">SRS</text>
<text x="423.8" y="270.25" font-family="Liberation Serif" font-size="5.9" text-anchor="start" fill="#2a2a2a" font-weight="normal" stroke="#2a2a2a" stroke-width="0.22">CONTROL</text>
<text x="423.8" y="276.40000000000003" font-family="Liberation Serif" font-size="5.9" text-anchor="start" fill="#2a2a2a" font-weight="normal" stroke="#2a2a2a" stroke-width="0.22" text-decoration="underline">MODULE</text>
<rect x="423.8" y="278.0" width="23.30000000000001" height="13.75" rx="0.9" fill="#fff" stroke="#808080" stroke-width="1.0"/>
<text x="425.0" y="283.6" font-family="Liberation Serif" font-size="5.7" text-anchor="start" fill="#444" font-weight="normal" stroke="#444" stroke-width="0.22">PHOTO</text>
<text x="425.0" y="289.4" font-family="Liberation Serif" font-size="5.7" text-anchor="start" fill="#444" font-weight="normal" stroke="#444" stroke-width="0.22">101</text>
<rect x="456.6" y="260.5" width="21.30000000000001" height="28.25" fill="#87cee9" stroke="#2a2a2a" stroke-width="1.15" stroke-dasharray="2.6 1.9"/>
<path d="M465,259.6 L468,256.8 L471,259.6 Z" fill="#fff" stroke="#999" stroke-width="0.7"/>
<path d="M465,289.6 L468,292.4 L471,289.6 Z" fill="#fff" stroke="#999" stroke-width="0.7"/>
<text x="467.3" y="274.0" font-family="Liberation Sans" font-size="5.1" text-anchor="middle" fill="#222" font-weight="normal" stroke="#222" stroke-width="0.18">Chassis</text>
<text x="467.3" y="279.6" font-family="Liberation Sans" font-size="5.3" text-anchor="middle" fill="#222" font-weight="normal" stroke="#222" stroke-width="0.18">CAN</text>
<text x="465.4" y="256.4" font-family="Liberation Sans" font-size="6.0" text-anchor="end" fill="#2a2a2a" font-weight="normal" stroke="#2a2a2a" stroke-width="0.18">3</text>
<text x="470.5" y="256.4" font-family="Liberation Serif" font-size="5.75" text-anchor="start" fill="#2a2af0" font-weight="normal" stroke="#2a2af0" stroke-width="0.22">R18</text>
<text x="465.4" y="297.2" font-family="Liberation Sans" font-size="6.0" text-anchor="end" fill="#2a2a2a" font-weight="normal" stroke="#2a2a2a" stroke-width="0.18">2</text>
<text x="470.5" y="297.4" font-family="Liberation Serif" font-size="5.75" text-anchor="start" fill="#2a2af0" font-weight="normal" stroke="#2a2af0" stroke-width="0.22">R18</text>
<text x="479.3" y="264.1" font-family="Liberation Serif" font-size="5.9" text-anchor="start" fill="#2a2a2a" font-weight="normal" stroke="#2a2a2a" stroke-width="0.22">LDWS</text>
<text x="479.3" y="270.25" font-family="Liberation Serif" font-size="5.9" text-anchor="start" fill="#2a2a2a" font-weight="normal" stroke="#2a2a2a" stroke-width="0.22" text-decoration="underline">CAMERA</text>
<rect x="479.3" y="271.75" width="23.5" height="14.0" rx="0.9" fill="#fff" stroke="#808080" stroke-width="1.0"/>
<text x="480.5" y="277.35" font-family="Liberation Serif" font-size="5.7" text-anchor="start" fill="#444" font-weight="normal" stroke="#444" stroke-width="0.22">PHOTO</text>
<text x="480.5" y="283.15" font-family="Liberation Serif" font-size="5.7" text-anchor="start" fill="#444" font-weight="normal" stroke="#444" stroke-width="0.22">57</text>
<rect x="541.1" y="260.5" width="21.299999999999955" height="28.25" fill="#87cee9" stroke="#2a2a2a" stroke-width="1.15" stroke-dasharray="2.6 1.9"/>
<path d="M549.5,259.6 L552.5,256.8 L555.5,259.6 Z" fill="#fff" stroke="#999" stroke-width="0.7"/>
<path d="M549.5,289.6 L552.5,292.4 L555.5,289.6 Z" fill="#fff" stroke="#999" stroke-width="0.7"/>
<text x="551.8" y="274.0" font-family="Liberation Sans" font-size="5.1" text-anchor="middle" fill="#222" font-weight="normal" stroke="#222" stroke-width="0.18">Chassis</text>
<text x="551.8" y="279.6" font-family="Liberation Sans" font-size="5.3" text-anchor="middle" fill="#222" font-weight="normal" stroke="#222" stroke-width="0.18">CAN</text>
<text x="549.9" y="256.4" font-family="Liberation Sans" font-size="6.0" text-anchor="end" fill="#2a2a2a" font-weight="normal" stroke="#2a2a2a" stroke-width="0.18">5</text>
<text x="555.0" y="256.4" font-family="Liberation Serif" font-size="5.75" text-anchor="start" fill="#2a2af0" font-weight="normal" stroke="#2a2af0" stroke-width="0.22">F41</text>
<text x="549.9" y="297.2" font-family="Liberation Sans" font-size="6.0" text-anchor="end" fill="#2a2a2a" font-weight="normal" stroke="#2a2a2a" stroke-width="0.18">3</text>
<text x="555.0" y="297.4" font-family="Liberation Serif" font-size="5.75" text-anchor="start" fill="#2a2af0" font-weight="normal" stroke="#2a2af0" stroke-width="0.22">F41</text>
<text x="563.8" y="264.1" font-family="Liberation Serif" font-size="5.9" text-anchor="start" fill="#2a2a2a" font-weight="normal" stroke="#2a2a2a" stroke-width="0.22">PRE-SAFE</text>
<text x="563.8" y="270.25" font-family="Liberation Serif" font-size="5.9" text-anchor="start" fill="#2a2a2a" font-weight="normal" stroke="#2a2a2a" stroke-width="0.22">SEAT BELT</text>
<text x="563.8" y="276.40000000000003" font-family="Liberation Serif" font-size="5.9" text-anchor="start" fill="#2a2a2a" font-weight="normal" stroke="#2a2a2a" stroke-width="0.22" text-decoration="underline">RH</text>
<rect x="563.8" y="278.0" width="24.5" height="13.25" rx="0.9" fill="#fff" stroke="#808080" stroke-width="1.0"/>
<text x="565.0" y="283.6" font-family="Liberation Serif" font-size="5.7" text-anchor="start" fill="#444" font-weight="normal" stroke="#444" stroke-width="0.22">PHOTO</text>
<text x="565.0" y="289.4" font-family="Liberation Serif" font-size="5.7" text-anchor="start" fill="#444" font-weight="normal" stroke="#444" stroke-width="0.22">103.167</text>
<rect x="661.1" y="260.5" width="21.299999999999955" height="28.25" fill="#87cee9" stroke="#2a2a2a" stroke-width="1.15" stroke-dasharray="2.6 1.9"/>
<path d="M669.5,259.6 L672.5,256.8 L675.5,259.6 Z" fill="#fff" stroke="#999" stroke-width="0.7"/>
<path d="M669.5,289.6 L672.5,292.4 L675.5,289.6 Z" fill="#fff" stroke="#999" stroke-width="0.7"/>
<text x="671.8" y="274.0" font-family="Liberation Sans" font-size="5.1" text-anchor="middle" fill="#222" font-weight="normal" stroke="#222" stroke-width="0.18">Chassis</text>
<text x="671.8" y="279.6" font-family="Liberation Sans" font-size="5.3" text-anchor="middle" fill="#222" font-weight="normal" stroke="#222" stroke-width="0.18">CAN</text>
<text x="669.9" y="256.4" font-family="Liberation Sans" font-size="6.0" text-anchor="end" fill="#2a2a2a" font-weight="normal" stroke="#2a2a2a" stroke-width="0.18">16</text>
<text x="675.0" y="256.4" font-family="Liberation Serif" font-size="5.75" text-anchor="start" fill="#2a2af0" font-weight="normal" stroke="#2a2af0" stroke-width="0.22">F80</text>
<text x="669.9" y="297.2" font-family="Liberation Sans" font-size="6.0" text-anchor="end" fill="#2a2a2a" font-weight="normal" stroke="#2a2a2a" stroke-width="0.18">8</text>
<text x="675.0" y="297.4" font-family="Liberation Serif" font-size="5.75" text-anchor="start" fill="#2a2af0" font-weight="normal" stroke="#2a2af0" stroke-width="0.22">F80</text>
<text x="683.8" y="264.1" font-family="Liberation Serif" font-size="5.9" text-anchor="start" fill="#2a2a2a" font-weight="normal" stroke="#2a2a2a" stroke-width="0.22">EPS</text>
<text x="683.8" y="270.25" font-family="Liberation Serif" font-size="5.9" text-anchor="start" fill="#2a2a2a" font-weight="normal" stroke="#2a2a2a" stroke-width="0.22">CONTROL</text>
<text x="683.8" y="276.40000000000003" font-family="Liberation Serif" font-size="5.9" text-anchor="start" fill="#2a2a2a" font-weight="normal" stroke="#2a2a2a" stroke-width="0.22" text-decoration="underline">MODULE</text>
<rect x="683.8" y="278.0" width="23.299999999999955" height="13.75" rx="0.9" fill="#fff" stroke="#808080" stroke-width="1.0"/>
<text x="685.0" y="283.6" font-family="Liberation Serif" font-size="5.7" text-anchor="start" fill="#444" font-weight="normal" stroke="#444" stroke-width="0.22">PHOTO</text>
<text x="685.0" y="289.4" font-family="Liberation Serif" font-size="5.7" text-anchor="start" fill="#444" font-weight="normal" stroke="#444" stroke-width="0.22">123</text>
<rect x="735.5" y="260.5" width="21.299999999999955" height="28.25" fill="#87cee9" stroke="#2a2a2a" stroke-width="1.15" stroke-dasharray="2.6 1.9"/>
<path d="M743.9,259.6 L746.9,256.8 L749.9,259.6 Z" fill="#fff" stroke="#999" stroke-width="0.7"/>
<path d="M743.9,289.6 L746.9,292.4 L749.9,289.6 Z" fill="#fff" stroke="#999" stroke-width="0.7"/>
<text x="746.1999999999999" y="274.0" font-family="Liberation Sans" font-size="5.1" text-anchor="middle" fill="#222" font-weight="normal" stroke="#222" stroke-width="0.18">Chassis</text>
<text x="746.1999999999999" y="279.6" font-family="Liberation Sans" font-size="5.3" text-anchor="middle" fill="#222" font-weight="normal" stroke="#222" stroke-width="0.18">CAN</text>
<text x="744.3" y="256.4" font-family="Liberation Sans" font-size="6.0" text-anchor="end" fill="#2a2a2a" font-weight="normal" stroke="#2a2a2a" stroke-width="0.18">61</text>
<text x="749.4" y="256.4" font-family="Liberation Serif" font-size="5.75" text-anchor="start" fill="#2a2af0" font-weight="normal" stroke="#2a2af0" stroke-width="0.22">F01-A</text>
<text x="744.3" y="297.2" font-family="Liberation Sans" font-size="6.0" text-anchor="end" fill="#2a2a2a" font-weight="normal" stroke="#2a2a2a" stroke-width="0.18">81</text>
<text x="749.4" y="297.4" font-family="Liberation Serif" font-size="5.75" text-anchor="start" fill="#2a2af0" font-weight="normal" stroke="#2a2af0" stroke-width="0.22">F01-A</text>
<text x="758.1999999999999" y="264.1" font-family="Liberation Serif" font-size="5.9" text-anchor="start" fill="#2a2a2a" font-weight="normal" stroke="#2a2a2a" stroke-width="0.22">ECS</text>
<text x="758.1999999999999" y="270.25" font-family="Liberation Serif" font-size="5.9" text-anchor="start" fill="#2a2a2a" font-weight="normal" stroke="#2a2a2a" stroke-width="0.22">CONTROL</text>
<text x="758.1999999999999" y="276.40000000000003" font-family="Liberation Serif" font-size="5.9" text-anchor="start" fill="#2a2a2a" font-weight="normal" stroke="#2a2a2a" stroke-width="0.22" text-decoration="underline">MODULE</text>
<rect x="758.1999999999999" y="278.0" width="24.5" height="13.75" rx="0.9" fill="#fff" stroke="#808080" stroke-width="1.0"/>
<text x="759.4" y="283.6" font-family="Liberation Serif" font-size="5.7" text-anchor="start" fill="#444" font-weight="normal" stroke="#444" stroke-width="0.22">PHOTO</text>
<text x="759.4" y="289.4" font-family="Liberation Serif" font-size="5.7" text-anchor="start" fill="#444" font-weight="normal" stroke="#444" stroke-width="0.22">117</text>
<text x="501.75" y="75.2" font-family="Liberation Serif" font-size="5.9" text-anchor="start" fill="#2a2a2a" font-weight="normal" stroke="#2a2a2a" stroke-width="0.22">JOINT</text>
<text x="501.75" y="82.0" font-family="Liberation Serif" font-size="5.9" text-anchor="start" fill="#2a2a2a" font-weight="normal" stroke="#2a2a2a" stroke-width="0.22" text-decoration="underline">CONNECTOR</text>
<rect x="501.75" y="84.5" width="32.700000000000045" height="6.200000000000003" rx="0.9" fill="#fff" stroke="#808080" stroke-width="1.0"/>
<text x="502.95" y="89.6" font-family="Liberation Serif" font-size="5.7" text-anchor="start" fill="#444" font-weight="normal" stroke="#444" stroke-width="0.22">PHOTO 83</text>
<text x="601.25" y="75.2" font-family="Liberation Serif" font-size="5.9" text-anchor="start" fill="#2a2a2a" font-weight="normal" stroke="#2a2a2a" stroke-width="0.22">JOINT</text>
<text x="601.25" y="82.0" font-family="Liberation Serif" font-size="5.9" text-anchor="start" fill="#2a2a2a" font-weight="normal" stroke="#2a2a2a" stroke-width="0.22" text-decoration="underline">CONNECTOR</text>
<rect x="601.25" y="84.5" width="34.700000000000045" height="6.200000000000003" rx="0.9" fill="#fff" stroke="#808080" stroke-width="1.0"/>
<text x="602.45" y="89.6" font-family="Liberation Serif" font-size="5.7" text-anchor="start" fill="#444" font-weight="normal" stroke="#444" stroke-width="0.22">PHOTO 109</text>
<text x="757.2" y="75.2" font-family="Liberation Serif" font-size="5.9" text-anchor="start" fill="#2a2a2a" font-weight="normal" stroke="#2a2a2a" stroke-width="0.22">JOINT</text>
<text x="757.2" y="82.0" font-family="Liberation Serif" font-size="5.9" text-anchor="start" fill="#2a2a2a" font-weight="normal" stroke="#2a2a2a" stroke-width="0.22" text-decoration="underline">CONNECTOR</text>
<rect x="757.2" y="84.5" width="35.5" height="6.200000000000003" rx="0.9" fill="#fff" stroke="#808080" stroke-width="1.0"/>
<text x="758.4000000000001" y="89.6" font-family="Liberation Serif" font-size="5.7" text-anchor="start" fill="#444" font-weight="normal" stroke="#444" stroke-width="0.22">PHOTO 118</text>
<text x="395" y="159.2" font-family="Liberation Serif" font-size="5.9" text-anchor="start" fill="#2a2a2a" font-weight="normal" stroke="#2a2a2a" stroke-width="0.22">JOINT</text>
<text x="395" y="165.89999999999998" font-family="Liberation Serif" font-size="5.9" text-anchor="start" fill="#2a2a2a" font-weight="normal" stroke="#2a2a2a" stroke-width="0.22" text-decoration="underline">CONNECTOR</text>
<rect x="395" y="167.8" width="31.399999999999977" height="6.599999999999994" rx="0.9" fill="#fff" stroke="#808080" stroke-width="1.0"/>
<text x="396.2" y="173.10000000000002" font-family="Liberation Serif" font-size="5.7" text-anchor="start" fill="#444" font-weight="normal" stroke="#444" stroke-width="0.22">PHOTO 60</text>
<text x="424.25" y="208.8" font-family="Liberation Serif" font-size="5.9" text-anchor="start" fill="#2a2a2a" font-weight="normal" stroke="#2a2a2a" stroke-width="0.22">JOINT</text>
<text x="424.25" y="215.05" font-family="Liberation Serif" font-size="5.9" text-anchor="start" fill="#2a2a2a" font-weight="normal" stroke="#2a2a2a" stroke-width="0.22" text-decoration="underline">CONNECTOR</text>
<rect x="424.25" y="215.75" width="23.19999999999999" height="13.5" rx="0.9" fill="#fff" stroke="#808080" stroke-width="1.0"/>
<text x="425.45" y="221.35" font-family="Liberation Serif" font-size="5.7" text-anchor="start" fill="#444" font-weight="normal" stroke="#444" stroke-width="0.22">PHOTO</text>
<text x="425.45" y="227.15" font-family="Liberation Serif" font-size="5.7" text-anchor="start" fill="#444" font-weight="normal" stroke="#444" stroke-width="0.22">61</text>
<text x="569.25" y="203.3" font-family="Liberation Serif" font-size="5.9" text-anchor="start" fill="#2a2a2a" font-weight="normal" stroke="#2a2a2a" stroke-width="0.22">JOINT</text>
<text x="569.25" y="209.55" font-family="Liberation Serif" font-size="5.9" text-anchor="start" fill="#2a2a2a" font-weight="normal" stroke="#2a2a2a" stroke-width="0.22" text-decoration="underline">CONNECTOR</text>
<rect x="569.25" y="211.25" width="24.5" height="13.0" rx="0.9" fill="#fff" stroke="#808080" stroke-width="1.0"/>
<text x="570.45" y="216.85" font-family="Liberation Serif" font-size="5.7" text-anchor="start" fill="#444" font-weight="normal" stroke="#444" stroke-width="0.22">PHOTO</text>
<text x="570.45" y="222.65" font-family="Liberation Serif" font-size="5.7" text-anchor="start" fill="#444" font-weight="normal" stroke="#444" stroke-width="0.22">103.167</text>
<text x="685.5" y="154.1" font-family="Liberation Serif" font-size="5.9" text-anchor="start" fill="#2a2a2a" font-weight="normal" stroke="#2a2a2a" stroke-width="0.22">JOINT</text>
<text x="685.5" y="160.35" font-family="Liberation Serif" font-size="5.9" text-anchor="start" fill="#2a2a2a" font-weight="normal" stroke="#2a2a2a" stroke-width="0.22" text-decoration="underline">CONNECTOR</text>
<rect x="685.5" y="162.5" width="23.700000000000045" height="13.0" rx="0.9" fill="#fff" stroke="#808080" stroke-width="1.0"/>
<text x="686.7" y="168.1" font-family="Liberation Serif" font-size="5.7" text-anchor="start" fill="#444" font-weight="normal" stroke="#444" stroke-width="0.22">PHOTO</text>
<text x="686.7" y="173.9" font-family="Liberation Serif" font-size="5.7" text-anchor="start" fill="#444" font-weight="normal" stroke="#444" stroke-width="0.22">123</text>
<text x="426.75" y="327.8" font-family="Liberation Serif" font-size="5.9" text-anchor="start" fill="#2a2a2a" font-weight="normal" stroke="#2a2a2a" stroke-width="0.22">JOINT</text>
<text x="426.75" y="333.8" font-family="Liberation Serif" font-size="5.9" text-anchor="start" fill="#2a2a2a" font-weight="normal" stroke="#2a2a2a" stroke-width="0.22" text-decoration="underline">CONNECTOR</text>
<rect x="426.75" y="336.75" width="32.5" height="6.5" rx="0.9" fill="#fff" stroke="#808080" stroke-width="1.0"/>
<text x="427.95" y="342.0" font-family="Liberation Serif" font-size="5.7" text-anchor="start" fill="#444" font-weight="normal" stroke="#444" stroke-width="0.22">PHOTO 61</text>
<text x="569.25" y="332.0" font-family="Liberation Serif" font-size="5.9" text-anchor="start" fill="#2a2a2a" font-weight="normal" stroke="#2a2a2a" stroke-width="0.22">JOINT</text>
<text x="569.25" y="338.25" font-family="Liberation Serif" font-size="5.9" text-anchor="start" fill="#2a2a2a" font-weight="normal" stroke="#2a2a2a" stroke-width="0.22" text-decoration="underline">CONNECTOR</text>
<rect x="569.25" y="340.0" width="24.5" height="12.5" rx="0.9" fill="#fff" stroke="#808080" stroke-width="1.0"/>
<text x="570.45" y="345.6" font-family="Liberation Serif" font-size="5.7" text-anchor="start" fill="#444" font-weight="normal" stroke="#444" stroke-width="0.22">PHOTO</text>
<text x="570.45" y="351.4" font-family="Liberation Serif" font-size="5.7" text-anchor="start" fill="#444" font-weight="normal" stroke="#444" stroke-width="0.22">103.167</text>
<text x="398.6" y="374.6" font-family="Liberation Serif" font-size="5.9" text-anchor="start" fill="#2a2a2a" font-weight="normal" stroke="#2a2a2a" stroke-width="0.22">JOINT</text>
<text x="398.6" y="381.3" font-family="Liberation Serif" font-size="5.9" text-anchor="start" fill="#2a2a2a" font-weight="normal" stroke="#2a2a2a" stroke-width="0.22" text-decoration="underline">CONNECTOR</text>
<rect x="398.6" y="383.5" width="31.80000000000001" height="6.600000000000023" rx="0.9" fill="#fff" stroke="#808080" stroke-width="1.0"/>
<text x="399.8" y="388.8" font-family="Liberation Serif" font-size="5.7" text-anchor="start" fill="#444" font-weight="normal" stroke="#444" stroke-width="0.22">PHOTO 60</text>
<text x="685.5" y="380.3" font-family="Liberation Serif" font-size="5.9" text-anchor="start" fill="#2a2a2a" font-weight="normal" stroke="#2a2a2a" stroke-width="0.22">JOINT</text>
<text x="685.5" y="386.3" font-family="Liberation Serif" font-size="5.9" text-anchor="start" fill="#2a2a2a" font-weight="normal" stroke="#2a2a2a" stroke-width="0.22" text-decoration="underline">CONNECTOR</text>
<rect x="685.5" y="388.25" width="23.200000000000045" height="12.5" rx="0.9" fill="#fff" stroke="#808080" stroke-width="1.0"/>
<text x="686.7" y="393.85" font-family="Liberation Serif" font-size="5.7" text-anchor="start" fill="#444" font-weight="normal" stroke="#444" stroke-width="0.22">PHOTO</text>
<text x="686.7" y="399.65" font-family="Liberation Serif" font-size="5.7" text-anchor="start" fill="#444" font-weight="normal" stroke="#444" stroke-width="0.22">123</text>
<text x="497.5" y="461.3" font-family="Liberation Serif" font-size="5.9" text-anchor="start" fill="#2a2a2a" font-weight="normal" stroke="#2a2a2a" stroke-width="0.22">JOINT</text>
<text x="497.5" y="467.1" font-family="Liberation Serif" font-size="5.9" text-anchor="start" fill="#2a2a2a" font-weight="normal" stroke="#2a2a2a" stroke-width="0.22" text-decoration="underline">CONNECTOR</text>
<rect x="497.5" y="469.5" width="31.700000000000045" height="6.25" rx="0.9" fill="#fff" stroke="#808080" stroke-width="1.0"/>
<text x="498.7" y="474.625" font-family="Liberation Serif" font-size="5.7" text-anchor="start" fill="#444" font-weight="normal" stroke="#444" stroke-width="0.22">PHOTO 83</text>
<text x="602" y="461.3" font-family="Liberation Serif" font-size="5.9" text-anchor="start" fill="#2a2a2a" font-weight="normal" stroke="#2a2a2a" stroke-width="0.22">JOINT</text>
<text x="602" y="467.1" font-family="Liberation Serif" font-size="5.9" text-anchor="start" fill="#2a2a2a" font-weight="normal" stroke="#2a2a2a" stroke-width="0.22" text-decoration="underline">CONNECTOR</text>
<rect x="602" y="469.5" width="34.700000000000045" height="6.25" rx="0.9" fill="#fff" stroke="#808080" stroke-width="1.0"/>
<text x="603.2" y="474.625" font-family="Liberation Serif" font-size="5.7" text-anchor="start" fill="#444" font-weight="normal" stroke="#444" stroke-width="0.22">PHOTO 109</text>
<text x="758.25" y="461.3" font-family="Liberation Serif" font-size="5.9" text-anchor="start" fill="#2a2a2a" font-weight="normal" stroke="#2a2a2a" stroke-width="0.22">JOINT</text>
<text x="758.25" y="467.1" font-family="Liberation Serif" font-size="5.9" text-anchor="start" fill="#2a2a2a" font-weight="normal" stroke="#2a2a2a" stroke-width="0.22" text-decoration="underline">CONNECTOR</text>
<rect x="758.25" y="469.5" width="35.5" height="6.25" rx="0.9" fill="#fff" stroke="#808080" stroke-width="1.0"/>
<text x="759.45" y="474.625" font-family="Liberation Serif" font-size="5.7" text-anchor="start" fill="#444" font-weight="normal" stroke="#444" stroke-width="0.22">PHOTO 118</text>
<rect x="401.6" y="110.4" width="31.399999999999977" height="7.0" rx="0.9" fill="#fff" stroke="#808080" stroke-width="1.0"/>
<text x="402.8" y="115.9" font-family="Liberation Serif" font-size="5.7" text-anchor="start" fill="#444" font-weight="normal" stroke="#444" stroke-width="0.22">PHOTO 83</text>
<rect x="402.5" y="129.0" width="31.80000000000001" height="7.0" rx="0.9" fill="#fff" stroke="#808080" stroke-width="1.0"/>
<text x="403.7" y="134.5" font-family="Liberation Serif" font-size="5.7" text-anchor="start" fill="#444" font-weight="normal" stroke="#444" stroke-width="0.22">PHOTO 74</text>
<rect x="493" y="127.0" width="31.25" height="6.400000000000006" rx="0.9" fill="#fff" stroke="#808080" stroke-width="1.0"/>
<text x="494.2" y="132.2" font-family="Liberation Serif" font-size="5.7" text-anchor="start" fill="#444" font-weight="normal" stroke="#444" stroke-width="0.22">PHOTO 83</text>
<rect x="677" y="128.0" width="34.25" height="6.5" rx="0.9" fill="#fff" stroke="#808080" stroke-width="1.0"/>
<text x="678.2" y="133.25" font-family="Liberation Serif" font-size="5.7" text-anchor="start" fill="#444" font-weight="normal" stroke="#444" stroke-width="0.22">PHOTO 115</text>
<rect x="402.5" y="414.25" width="31.75" height="6.5" rx="0.9" fill="#fff" stroke="#808080" stroke-width="1.0"/>
<text x="403.7" y="419.5" font-family="Liberation Serif" font-size="5.7" text-anchor="start" fill="#444" font-weight="normal" stroke="#444" stroke-width="0.22">PHOTO 74</text>
<rect x="402.5" y="430.75" width="31.75" height="6.75" rx="0.9" fill="#fff" stroke="#808080" stroke-width="1.0"/>
<text x="403.7" y="436.125" font-family="Liberation Serif" font-size="5.7" text-anchor="start" fill="#444" font-weight="normal" stroke="#444" stroke-width="0.22">PHOTO 83</text>
<rect x="493" y="429.25" width="31.25" height="6.5" rx="0.9" fill="#fff" stroke="#808080" stroke-width="1.0"/>
<text x="494.2" y="434.5" font-family="Liberation Serif" font-size="5.7" text-anchor="start" fill="#444" font-weight="normal" stroke="#444" stroke-width="0.22">PHOTO 83</text>
<rect x="678" y="431.25" width="23.25" height="13.25" rx="0.9" fill="#fff" stroke="#808080" stroke-width="1.0"/>
<text x="679.2" y="436.85" font-family="Liberation Serif" font-size="5.7" text-anchor="start" fill="#444" font-weight="normal" stroke="#444" stroke-width="0.22">PHOTO</text>
<text x="679.2" y="442.65" font-family="Liberation Serif" font-size="5.7" text-anchor="start" fill="#444" font-weight="normal" stroke="#444" stroke-width="0.22">115</text>
<text x="211.3" y="91.0" font-family="Liberation Sans" font-size="6.0" text-anchor="middle" fill="#2a2a2a" font-weight="normal" stroke="#2a2a2a" stroke-width="0.18">To Data Link</text>
<text x="211.3" y="97.0" font-family="Liberation Sans" font-size="6.0" text-anchor="middle" fill="#2a2a2a" font-weight="normal" stroke="#2a2a2a" stroke-width="0.18">Connector</text>
<text x="209.8" y="103.0" font-family="Liberation Serif" font-size="5.7" text-anchor="middle" fill="#2a2af0" font-weight="normal" stroke="#2a2af0" stroke-width="0.22">(SD200-1)</text>
<text x="211.3" y="443.8" font-family="Liberation Sans" font-size="6.0" text-anchor="middle" fill="#2a2a2a" font-weight="normal" stroke="#2a2a2a" stroke-width="0.18">To Data Link</text>
<text x="211.3" y="450.5" font-family="Liberation Sans" font-size="6.0" text-anchor="middle" fill="#2a2a2a" font-weight="normal" stroke="#2a2a2a" stroke-width="0.18">Connector</text>
<text x="209.8" y="457.2" font-family="Liberation Serif" font-size="5.7" text-anchor="middle" fill="#2a2af0" font-weight="normal" stroke="#2a2af0" stroke-width="0.22">(SD200-1)</text>
<text x="382" y="265.8" font-family="Liberation Sans" font-size="6.0" text-anchor="middle" fill="#2a2a2a" font-weight="normal" stroke="#2a2a2a" stroke-width="0.18">From</text>
<text x="382" y="272.0" font-family="Liberation Sans" font-size="6.0" text-anchor="middle" fill="#2a2a2a" font-weight="normal" stroke="#2a2a2a" stroke-width="0.18">Instrument</text>
<text x="382" y="278.2" font-family="Liberation Sans" font-size="6.0" text-anchor="middle" fill="#2a2a2a" font-weight="normal" stroke="#2a2a2a" stroke-width="0.18">cluster</text>
<text x="382" y="284.0" font-family="Liberation Serif" font-size="5.7" text-anchor="middle" fill="#2a2af0" font-weight="normal" stroke="#2a2af0" stroke-width="0.22">(SD200-4)</text>
<text x="729.65" y="139.0" font-family="Liberation Sans" font-size="6.0" text-anchor="middle" fill="#2a2a2a" font-weight="normal" stroke="#2a2a2a" stroke-width="0.18">From Joint</text>
<text x="729.65" y="145.2" font-family="Liberation Sans" font-size="6.0" text-anchor="middle" fill="#2a2a2a" font-weight="normal" stroke="#2a2a2a" stroke-width="0.18">Connector</text>
<text x="728.45" y="151.5" font-family="Liberation Serif" font-size="5.7" text-anchor="middle" fill="#2a2af0" font-weight="normal" stroke="#2a2af0" stroke-width="0.22">(SD200-3)</text>
<text x="729.65" y="400.8" font-family="Liberation Sans" font-size="6.0" text-anchor="middle" fill="#2a2a2a" font-weight="normal" stroke="#2a2a2a" stroke-width="0.18">From Joint</text>
<text x="729.65" y="407.0" font-family="Liberation Sans" font-size="6.0" text-anchor="middle" fill="#2a2a2a" font-weight="normal" stroke="#2a2a2a" stroke-width="0.18">Connector</text>
<text x="728.45" y="413.2" font-family="Liberation Serif" font-size="5.7" text-anchor="middle" fill="#2a2af0" font-weight="normal" stroke="#2a2af0" stroke-width="0.22">(SD200-3)</text>
<text x="207.2" y="133.9" font-family="Liberation Sans" font-size="6.0" text-anchor="end" fill="#2a2a2a" font-weight="normal" stroke="#2a2a2a" stroke-width="0.18">0.3O</text>
<text x="207.20000000000002" y="150.3" font-family="Liberation Sans" font-size="6.0" text-anchor="end" fill="#2a2a2a" font-weight="normal" stroke="#2a2a2a" stroke-width="0.18">7</text>
<text x="206.70000000000002" y="186.3" font-family="Liberation Sans" font-size="6.0" text-anchor="end" fill="#2a2a2a" font-weight="normal" stroke="#2a2a2a" stroke-width="0.18">9</text>
<text x="207.2" y="236.6" font-family="Liberation Sans" font-size="6.0" text-anchor="end" fill="#2a2a2a" font-weight="normal" stroke="#2a2a2a" stroke-width="0.18">0.3O</text>
<text x="207.2" y="343.8" font-family="Liberation Sans" font-size="6.0" text-anchor="end" fill="#2a2a2a" font-weight="normal" stroke="#2a2a2a" stroke-width="0.18">0.3G</text>
<text x="207.8" y="366.6" font-family="Liberation Sans" font-size="6.0" text-anchor="end" fill="#2a2a2a" font-weight="normal" stroke="#2a2a2a" stroke-width="0.18">19</text>
<text x="207.8" y="402.8" font-family="Liberation Sans" font-size="6.0" text-anchor="end" fill="#2a2a2a" font-weight="normal" stroke="#2a2a2a" stroke-width="0.18">17</text>
<text x="207.2" y="411.3" font-family="Liberation Sans" font-size="6.0" text-anchor="end" fill="#2a2a2a" font-weight="normal" stroke="#2a2a2a" stroke-width="0.18">0.3G</text>
<text x="264.7" y="218.8" font-family="Liberation Sans" font-size="6.0" text-anchor="end" fill="#2a2a2a" font-weight="normal" stroke="#2a2a2a" stroke-width="0.18">0.3O</text>
<text x="264.7" y="343.8" font-family="Liberation Sans" font-size="6.0" text-anchor="end" fill="#2a2a2a" font-weight="normal" stroke="#2a2a2a" stroke-width="0.18">0.3G</text>
<text x="317.09999999999997" y="186.3" font-family="Liberation Sans" font-size="6.0" text-anchor="end" fill="#2a2a2a" font-weight="normal" stroke="#2a2a2a" stroke-width="0.18">10</text>
<text x="316.2" y="236.6" font-family="Liberation Sans" font-size="6.0" text-anchor="end" fill="#2a2a2a" font-weight="normal" stroke="#2a2a2a" stroke-width="0.18">0.3O</text>
<text x="316.2" y="343.8" font-family="Liberation Sans" font-size="6.0" text-anchor="end" fill="#2a2a2a" font-weight="normal" stroke="#2a2a2a" stroke-width="0.18">0.3G</text>
<text x="317.59999999999997" y="366.6" font-family="Liberation Sans" font-size="6.0" text-anchor="end" fill="#2a2a2a" font-weight="normal" stroke="#2a2a2a" stroke-width="0.18">20</text>
<text x="378.4" y="101.2" font-family="Liberation Sans" font-size="6.0" text-anchor="end" fill="#2a2a2a" font-weight="normal" stroke="#2a2a2a" stroke-width="0.18">7</text>
<text x="380.2" y="109.2" font-family="Liberation Sans" font-size="6.0" text-anchor="end" fill="#2a2a2a" font-weight="normal" stroke="#2a2a2a" stroke-width="0.18">0.3O</text>
<text x="378.4" y="116.0" font-family="Liberation Sans" font-size="6.0" text-anchor="end" fill="#2a2a2a" font-weight="normal" stroke="#2a2a2a" stroke-width="0.18">7</text>
<text x="386.9" y="116.0" font-family="Liberation Serif" font-size="5.75" text-anchor="start" fill="#2a2af0" font-weight="normal" stroke="#2a2af0" stroke-width="0.22">FR21</text>
<text x="380.2" y="125.6" font-family="Liberation Sans" font-size="6.0" text-anchor="end" fill="#2a2a2a" font-weight="normal" stroke="#2a2a2a" stroke-width="0.18">0.3O</text>
<text x="377.2" y="135.2" font-family="Liberation Sans" font-size="6.0" text-anchor="end" fill="#2a2a2a" font-weight="normal" stroke="#2a2a2a" stroke-width="0.18">26</text>
<text x="387.5" y="135.2" font-family="Liberation Serif" font-size="5.75" text-anchor="start" fill="#2a2af0" font-weight="normal" stroke="#2a2af0" stroke-width="0.22">MF21</text>
<text x="380.2" y="142.8" font-family="Liberation Sans" font-size="6.0" text-anchor="end" fill="#2a2a2a" font-weight="normal" stroke="#2a2a2a" stroke-width="0.18">0.3O</text>
<text x="379.2" y="150.0" font-family="Liberation Sans" font-size="6.0" text-anchor="end" fill="#2a2a2a" font-weight="normal" stroke="#2a2a2a" stroke-width="0.18">6</text>
<text x="385.5" y="150.0" font-family="Liberation Serif" font-size="5.75" text-anchor="start" fill="#2a2af0" font-weight="normal" stroke="#2a2af0" stroke-width="0.22">JM01</text>
<text x="379.2" y="186.3" font-family="Liberation Sans" font-size="6.0" text-anchor="end" fill="#2a2a2a" font-weight="normal" stroke="#2a2a2a" stroke-width="0.18">8</text>
<text x="385.5" y="186.3" font-family="Liberation Serif" font-size="5.75" text-anchor="start" fill="#2a2af0" font-weight="normal" stroke="#2a2af0" stroke-width="0.22">JM01</text>
<text x="380.2" y="193.3" font-family="Liberation Sans" font-size="6.0" text-anchor="end" fill="#2a2a2a" font-weight="normal" stroke="#2a2a2a" stroke-width="0.18">0.3O</text>
<text x="379.2" y="200.3" font-family="Liberation Sans" font-size="6.0" text-anchor="end" fill="#2a2a2a" font-weight="normal" stroke="#2a2a2a" stroke-width="0.18">1</text>
<text x="385.5" y="200.3" font-family="Liberation Serif" font-size="5.75" text-anchor="start" fill="#2a2af0" font-weight="normal" stroke="#2a2af0" stroke-width="0.22">JM12</text>
<text x="378.7" y="233.8" font-family="Liberation Sans" font-size="6.0" text-anchor="end" fill="#2a2a2a" font-weight="normal" stroke="#2a2a2a" stroke-width="0.18">3</text>
<text x="380.2" y="240.1" font-family="Liberation Sans" font-size="6.0" text-anchor="end" fill="#2a2a2a" font-weight="normal" stroke="#2a2a2a" stroke-width="0.18">0.3O</text>
<text x="380.2" y="310.8" font-family="Liberation Sans" font-size="6.0" text-anchor="end" fill="#2a2a2a" font-weight="normal" stroke="#2a2a2a" stroke-width="0.18">0.3G</text>
<text x="379.2" y="318.3" font-family="Liberation Sans" font-size="6.0" text-anchor="end" fill="#2a2a2a" font-weight="normal" stroke="#2a2a2a" stroke-width="0.18">8</text>
<text x="379.2" y="352.8" font-family="Liberation Sans" font-size="6.0" text-anchor="end" fill="#2a2a2a" font-weight="normal" stroke="#2a2a2a" stroke-width="0.18">4</text>
<text x="385.5" y="352.8" font-family="Liberation Serif" font-size="5.75" text-anchor="start" fill="#2a2af0" font-weight="normal" stroke="#2a2af0" stroke-width="0.22">JM12</text>
<text x="380.2" y="360.0" font-family="Liberation Sans" font-size="6.0" text-anchor="end" fill="#2a2a2a" font-weight="normal" stroke="#2a2a2a" stroke-width="0.18">0.3G</text>
<text x="380.0" y="366.6" font-family="Liberation Sans" font-size="6.0" text-anchor="end" fill="#2a2a2a" font-weight="normal" stroke="#2a2a2a" stroke-width="0.18">18</text>
<text x="385.5" y="366.6" font-family="Liberation Serif" font-size="5.75" text-anchor="start" fill="#2a2af0" font-weight="normal" stroke="#2a2af0" stroke-width="0.22">JM01</text>
<text x="380.0" y="402.8" font-family="Liberation Sans" font-size="6.0" text-anchor="end" fill="#2a2a2a" font-weight="normal" stroke="#2a2a2a" stroke-width="0.18">16</text>
<text x="385.5" y="402.8" font-family="Liberation Serif" font-size="5.75" text-anchor="start" fill="#2a2af0" font-weight="normal" stroke="#2a2af0" stroke-width="0.22">JM01</text>
<text x="380.2" y="411.3" font-family="Liberation Sans" font-size="6.0" text-anchor="end" fill="#2a2a2a" font-weight="normal" stroke="#2a2a2a" stroke-width="0.18">0.3G</text>
<text x="376.59999999999997" y="419.6" font-family="Liberation Sans" font-size="6.0" text-anchor="end" fill="#2a2a2a" font-weight="normal" stroke="#2a2a2a" stroke-width="0.18">25</text>
<text x="387.5" y="419.6" font-family="Liberation Serif" font-size="5.75" text-anchor="start" fill="#2a2af0" font-weight="normal" stroke="#2a2af0" stroke-width="0.22">MF21</text>
<text x="380.2" y="428.4" font-family="Liberation Sans" font-size="6.0" text-anchor="end" fill="#2a2a2a" font-weight="normal" stroke="#2a2a2a" stroke-width="0.18">0.3G</text>
<text x="376.9" y="437.1" font-family="Liberation Sans" font-size="6.0" text-anchor="end" fill="#2a2a2a" font-weight="normal" stroke="#2a2a2a" stroke-width="0.18">15</text>
<text x="387.5" y="437.1" font-family="Liberation Serif" font-size="5.75" text-anchor="start" fill="#2a2af0" font-weight="normal" stroke="#2a2af0" stroke-width="0.22">FR21</text>
<text x="380.2" y="444.6" font-family="Liberation Sans" font-size="6.0" text-anchor="end" fill="#2a2a2a" font-weight="normal" stroke="#2a2a2a" stroke-width="0.18">0.3G</text>
<text x="379.2" y="452.0" font-family="Liberation Sans" font-size="6.0" text-anchor="end" fill="#2a2a2a" font-weight="normal" stroke="#2a2a2a" stroke-width="0.18">2</text>
<text x="409.2" y="233.8" font-family="Liberation Sans" font-size="6.0" text-anchor="end" fill="#2a2a2a" font-weight="normal" stroke="#2a2a2a" stroke-width="0.18">2</text>
<text x="415" y="233.8" font-family="Liberation Serif" font-size="5.75" text-anchor="start" fill="#2a2af0" font-weight="normal" stroke="#2a2af0" stroke-width="0.22">JM12</text>
<text x="409.7" y="244.6" font-family="Liberation Sans" font-size="6.0" text-anchor="end" fill="#2a2a2a" font-weight="normal" stroke="#2a2a2a" stroke-width="0.18">0.3O</text>
<text x="409.7" y="310.8" font-family="Liberation Sans" font-size="6.0" text-anchor="end" fill="#2a2a2a" font-weight="normal" stroke="#2a2a2a" stroke-width="0.18">0.3G</text>
<text x="409.2" y="318.3" font-family="Liberation Sans" font-size="6.0" text-anchor="end" fill="#2a2a2a" font-weight="normal" stroke="#2a2a2a" stroke-width="0.18">7</text>
<text x="415" y="318.3" font-family="Liberation Serif" font-size="5.75" text-anchor="start" fill="#2a2af0" font-weight="normal" stroke="#2a2af0" stroke-width="0.22">JM12</text>
<text x="465.4" y="101.2" font-family="Liberation Sans" font-size="6.0" text-anchor="end" fill="#2a2a2a" font-weight="normal" stroke="#2a2a2a" stroke-width="0.18">5</text>
<text x="465.2" y="244.6" font-family="Liberation Sans" font-size="6.0" text-anchor="end" fill="#2a2a2a" font-weight="normal" stroke="#2a2a2a" stroke-width="0.18">0.3O</text>
<text x="465.2" y="357.8" font-family="Liberation Sans" font-size="6.0" text-anchor="end" fill="#2a2a2a" font-weight="normal" stroke="#2a2a2a" stroke-width="0.18">0.3G</text>
<text x="465.4" y="452.0" font-family="Liberation Sans" font-size="6.0" text-anchor="end" fill="#2a2a2a" font-weight="normal" stroke="#2a2a2a" stroke-width="0.18">3</text>
<text x="485.45" y="101.2" font-family="Liberation Sans" font-size="6.0" text-anchor="end" fill="#2a2a2a" font-weight="normal" stroke="#2a2a2a" stroke-width="0.18">4</text>
<text x="490" y="101.2" font-family="Liberation Serif" font-size="5.75" text-anchor="start" fill="#2a2af0" font-weight="normal" stroke="#2a2af0" stroke-width="0.22">JR02</text>
<text x="484.95" y="113.8" font-family="Liberation Sans" font-size="6.0" text-anchor="end" fill="#2a2a2a" font-weight="normal" stroke="#2a2a2a" stroke-width="0.18">0.3O</text>
<text x="483.45" y="124.6" font-family="Liberation Sans" font-size="6.0" text-anchor="end" fill="#2a2a2a" font-weight="normal" stroke="#2a2a2a" stroke-width="0.18">8</text>
<text x="492.5" y="124.6" font-family="Liberation Serif" font-size="5.75" text-anchor="start" fill="#2a2af0" font-weight="normal" stroke="#2a2af0" stroke-width="0.22">FR21</text>
<text x="484.95" y="137.1" font-family="Liberation Sans" font-size="6.0" text-anchor="end" fill="#2a2a2a" font-weight="normal" stroke="#2a2a2a" stroke-width="0.18">0.3O</text>
<text x="486.34999999999997" y="195.3" font-family="Liberation Sans" font-size="6.0" text-anchor="end" fill="#2a2a2a" font-weight="normal" stroke="#2a2a2a" stroke-width="0.18">10</text>
<text x="486.15" y="358.3" font-family="Liberation Sans" font-size="6.0" text-anchor="end" fill="#2a2a2a" font-weight="normal" stroke="#2a2a2a" stroke-width="0.18">20</text>
<text x="484.95" y="415.3" font-family="Liberation Sans" font-size="6.0" text-anchor="end" fill="#2a2a2a" font-weight="normal" stroke="#2a2a2a" stroke-width="0.18">0.3G</text>
<text x="483.34999999999997" y="427.0" font-family="Liberation Sans" font-size="6.0" text-anchor="end" fill="#2a2a2a" font-weight="normal" stroke="#2a2a2a" stroke-width="0.18">16</text>
<text x="492.5" y="426.3" font-family="Liberation Serif" font-size="5.75" text-anchor="start" fill="#2a2af0" font-weight="normal" stroke="#2a2af0" stroke-width="0.22">FR21</text>
<text x="484.95" y="439.5" font-family="Liberation Sans" font-size="6.0" text-anchor="end" fill="#2a2a2a" font-weight="normal" stroke="#2a2a2a" stroke-width="0.18">0.3G</text>
<text x="485.45" y="452.0" font-family="Liberation Sans" font-size="6.0" text-anchor="end" fill="#2a2a2a" font-weight="normal" stroke="#2a2a2a" stroke-width="0.18">1</text>
<text x="490" y="452.0" font-family="Liberation Serif" font-size="5.75" text-anchor="start" fill="#2a2af0" font-weight="normal" stroke="#2a2af0" stroke-width="0.22">JR02</text>
<text x="549.6999999999999" y="101.2" font-family="Liberation Sans" font-size="6.0" text-anchor="end" fill="#2a2a2a" font-weight="normal" stroke="#2a2a2a" stroke-width="0.18">2</text>
<text x="550.7" y="110.0" font-family="Liberation Sans" font-size="6.0" text-anchor="end" fill="#2a2a2a" font-weight="normal" stroke="#2a2a2a" stroke-width="0.18">0.3O</text>
<text x="550.4" y="195.3" font-family="Liberation Sans" font-size="6.0" text-anchor="end" fill="#2a2a2a" font-weight="normal" stroke="#2a2a2a" stroke-width="0.18">9</text>
<text x="556.25" y="195.3" font-family="Liberation Serif" font-size="5.75" text-anchor="start" fill="#2a2af0" font-weight="normal" stroke="#2a2af0" stroke-width="0.22">JF13</text>
<text x="550.9" y="230.8" font-family="Liberation Sans" font-size="6.0" text-anchor="end" fill="#2a2a2a" font-weight="normal" stroke="#2a2a2a" stroke-width="0.18">7</text>
<text x="556.25" y="230.8" font-family="Liberation Serif" font-size="5.75" text-anchor="start" fill="#2a2af0" font-weight="normal" stroke="#2a2af0" stroke-width="0.22">JF13</text>
<text x="549.7" y="244.6" font-family="Liberation Sans" font-size="6.0" text-anchor="end" fill="#2a2a2a" font-weight="normal" stroke="#2a2a2a" stroke-width="0.18">0.3O</text>
<text x="549.7" y="314.6" font-family="Liberation Sans" font-size="6.0" text-anchor="end" fill="#2a2a2a" font-weight="normal" stroke="#2a2a2a" stroke-width="0.18">0.3G</text>
<text x="552.1" y="323.8" font-family="Liberation Sans" font-size="6.0" text-anchor="end" fill="#2a2a2a" font-weight="normal" stroke="#2a2a2a" stroke-width="0.18">17</text>
<text x="555.7" y="323.8" font-family="Liberation Serif" font-size="5.75" text-anchor="start" fill="#2a2af0" font-weight="normal" stroke="#2a2af0" stroke-width="0.22">JF13</text>
<text x="552.1" y="358.3" font-family="Liberation Sans" font-size="6.0" text-anchor="end" fill="#2a2a2a" font-weight="normal" stroke="#2a2a2a" stroke-width="0.18">19</text>
<text x="555.7" y="358.3" font-family="Liberation Serif" font-size="5.75" text-anchor="start" fill="#2a2af0" font-weight="normal" stroke="#2a2af0" stroke-width="0.22">JF13</text>
<text x="549.7" y="416.3" font-family="Liberation Sans" font-size="6.0" text-anchor="end" fill="#2a2a2a" font-weight="normal" stroke="#2a2a2a" stroke-width="0.18">0.3G</text>
<text x="549.1999999999999" y="452.0" font-family="Liberation Sans" font-size="6.0" text-anchor="end" fill="#2a2a2a" font-weight="normal" stroke="#2a2a2a" stroke-width="0.18">7</text>
<text x="572.9" y="101.2" font-family="Liberation Sans" font-size="6.0" text-anchor="end" fill="#2a2a2a" font-weight="normal" stroke="#2a2a2a" stroke-width="0.18">3</text>
<text x="574.5" y="111.9" font-family="Liberation Sans" font-size="6.0" text-anchor="end" fill="#2a2a2a" font-weight="normal" stroke="#2a2a2a" stroke-width="0.18">0.3O</text>
<text x="570.4" y="124.6" font-family="Liberation Sans" font-size="6.0" text-anchor="end" fill="#2a2a2a" font-weight="normal" stroke="#2a2a2a" stroke-width="0.18">9</text>
<text x="574.5" y="135.8" font-family="Liberation Sans" font-size="6.0" text-anchor="end" fill="#2a2a2a" font-weight="normal" stroke="#2a2a2a" stroke-width="0.18">0.5O</text>
<text x="573.6999999999999" y="145.3" font-family="Liberation Sans" font-size="6.0" text-anchor="end" fill="#2a2a2a" font-weight="normal" stroke="#2a2a2a" stroke-width="0.18">1</text>
<text x="575.4" y="407.6" font-family="Liberation Sans" font-size="6.0" text-anchor="end" fill="#2a2a2a" font-weight="normal" stroke="#2a2a2a" stroke-width="0.18">4</text>
<text x="575.8" y="416.3" font-family="Liberation Sans" font-size="6.0" text-anchor="end" fill="#2a2a2a" font-weight="normal" stroke="#2a2a2a" stroke-width="0.18">0.5G</text>
<text x="574.0999999999999" y="429.5" font-family="Liberation Sans" font-size="6.0" text-anchor="end" fill="#2a2a2a" font-weight="normal" stroke="#2a2a2a" stroke-width="0.18">14</text>
<text x="575.8" y="441.6" font-family="Liberation Sans" font-size="6.0" text-anchor="end" fill="#2a2a2a" font-weight="normal" stroke="#2a2a2a" stroke-width="0.18">0.3G</text>
<text x="574.1999999999999" y="452.0" font-family="Liberation Sans" font-size="6.0" text-anchor="end" fill="#2a2a2a" font-weight="normal" stroke="#2a2a2a" stroke-width="0.18">8</text>
<text x="586.6999999999999" y="101.2" font-family="Liberation Sans" font-size="6.0" text-anchor="end" fill="#2a2a2a" font-weight="normal" stroke="#2a2a2a" stroke-width="0.18">4</text>
<text x="592" y="101.2" font-family="Liberation Serif" font-size="5.75" text-anchor="start" fill="#2a2af0" font-weight="normal" stroke="#2a2af0" stroke-width="0.22">JF14</text>
<text x="589.1999999999999" y="452.0" font-family="Liberation Sans" font-size="6.0" text-anchor="end" fill="#2a2a2a" font-weight="normal" stroke="#2a2a2a" stroke-width="0.18">9</text>
<text x="595" y="452.0" font-family="Liberation Serif" font-size="5.75" text-anchor="start" fill="#2a2af0" font-weight="normal" stroke="#2a2af0" stroke-width="0.22">JF14</text>
<text x="647.9499999999999" y="101.2" font-family="Liberation Sans" font-size="6.0" text-anchor="end" fill="#2a2a2a" font-weight="normal" stroke="#2a2a2a" stroke-width="0.18">1</text>
<text x="648.45" y="111.9" font-family="Liberation Sans" font-size="6.0" text-anchor="end" fill="#2a2a2a" font-weight="normal" stroke="#2a2a2a" stroke-width="0.18">0.3O</text>
<text x="648.45" y="441.6" font-family="Liberation Sans" font-size="6.0" text-anchor="end" fill="#2a2a2a" font-weight="normal" stroke="#2a2a2a" stroke-width="0.18">0.3G</text>
<text x="647.9499999999999" y="452.0" font-family="Liberation Sans" font-size="6.0" text-anchor="end" fill="#2a2a2a" font-weight="normal" stroke="#2a2a2a" stroke-width="0.18">6</text>
<text x="669.6999999999999" y="101.2" font-family="Liberation Sans" font-size="6.0" text-anchor="end" fill="#2a2a2a" font-weight="normal" stroke="#2a2a2a" stroke-width="0.18">2</text>
<text x="670.7" y="111.9" font-family="Liberation Sans" font-size="6.0" text-anchor="end" fill="#2a2a2a" font-weight="normal" stroke="#2a2a2a" stroke-width="0.18">0.3O</text>
<text x="668.6" y="124.6" font-family="Liberation Sans" font-size="6.0" text-anchor="end" fill="#2a2a2a" font-weight="normal" stroke="#2a2a2a" stroke-width="0.18">12</text>
<text x="677.5" y="124.6" font-family="Liberation Serif" font-size="5.75" text-anchor="start" fill="#2a2af0" font-weight="normal" stroke="#2a2af0" stroke-width="0.22">FF02</text>
<text x="670.7" y="135.8" font-family="Liberation Sans" font-size="6.0" text-anchor="end" fill="#2a2a2a" font-weight="normal" stroke="#2a2a2a" stroke-width="0.18">0.5O</text>
<text x="669.6999999999999" y="145.3" font-family="Liberation Sans" font-size="6.0" text-anchor="end" fill="#2a2a2a" font-weight="normal" stroke="#2a2a2a" stroke-width="0.18">2</text>
<text x="676.25" y="145.3" font-family="Liberation Serif" font-size="5.75" text-anchor="start" fill="#2a2af0" font-weight="normal" stroke="#2a2af0" stroke-width="0.22">JF31</text>
<text x="669.6999999999999" y="180.8" font-family="Liberation Sans" font-size="6.0" text-anchor="end" fill="#2a2a2a" font-weight="normal" stroke="#2a2a2a" stroke-width="0.18">3</text>
<text x="676.25" y="180.8" font-family="Liberation Serif" font-size="5.75" text-anchor="start" fill="#2a2af0" font-weight="normal" stroke="#2a2af0" stroke-width="0.22">JF31</text>
<text x="669.7" y="244.6" font-family="Liberation Sans" font-size="6.0" text-anchor="end" fill="#2a2a2a" font-weight="normal" stroke="#2a2a2a" stroke-width="0.18">0.5O</text>
<text x="669.7" y="310.8" font-family="Liberation Sans" font-size="6.0" text-anchor="end" fill="#2a2a2a" font-weight="normal" stroke="#2a2a2a" stroke-width="0.18">0.5G</text>
<text x="669.1999999999999" y="372.6" font-family="Liberation Sans" font-size="6.0" text-anchor="end" fill="#2a2a2a" font-weight="normal" stroke="#2a2a2a" stroke-width="0.18">6</text>
<text x="676.25" y="372.6" font-family="Liberation Serif" font-size="5.75" text-anchor="start" fill="#2a2af0" font-weight="normal" stroke="#2a2af0" stroke-width="0.22">JF31</text>
<text x="669.6999999999999" y="407.8" font-family="Liberation Sans" font-size="6.0" text-anchor="end" fill="#2a2a2a" font-weight="normal" stroke="#2a2a2a" stroke-width="0.18">5</text>
<text x="676.25" y="407.8" font-family="Liberation Serif" font-size="5.75" text-anchor="start" fill="#2a2af0" font-weight="normal" stroke="#2a2af0" stroke-width="0.22">JF31</text>
<text x="670.7" y="416.6" font-family="Liberation Sans" font-size="6.0" text-anchor="end" fill="#2a2a2a" font-weight="normal" stroke="#2a2a2a" stroke-width="0.18">0.5G</text>
<text x="667.6999999999999" y="429.5" font-family="Liberation Sans" font-size="6.0" text-anchor="end" fill="#2a2a2a" font-weight="normal" stroke="#2a2a2a" stroke-width="0.18">5</text>
<text x="677.5" y="429.5" font-family="Liberation Serif" font-size="5.75" text-anchor="start" fill="#2a2af0" font-weight="normal" stroke="#2a2af0" stroke-width="0.22">FF02</text>
<text x="670.7" y="441.6" font-family="Liberation Sans" font-size="6.0" text-anchor="end" fill="#2a2a2a" font-weight="normal" stroke="#2a2a2a" stroke-width="0.18">0.3G</text>
<text x="669.1999999999999" y="452.0" font-family="Liberation Sans" font-size="6.0" text-anchor="end" fill="#2a2a2a" font-weight="normal" stroke="#2a2a2a" stroke-width="0.18">7</text>
<text x="727.9499999999999" y="101.2" font-family="Liberation Sans" font-size="6.0" text-anchor="end" fill="#2a2a2a" font-weight="normal" stroke="#2a2a2a" stroke-width="0.18">5</text>
<text x="727.45" y="111.9" font-family="Liberation Sans" font-size="6.0" text-anchor="end" fill="#2a2a2a" font-weight="normal" stroke="#2a2a2a" stroke-width="0.18">0.3O</text>
<text x="727.45" y="441.6" font-family="Liberation Sans" font-size="6.0" text-anchor="end" fill="#2a2a2a" font-weight="normal" stroke="#2a2a2a" stroke-width="0.18">0.3G</text>
<text x="727.9499999999999" y="452.0" font-family="Liberation Sans" font-size="6.0" text-anchor="end" fill="#2a2a2a" font-weight="normal" stroke="#2a2a2a" stroke-width="0.18">10</text>
<text x="744.6999999999999" y="101.2" font-family="Liberation Sans" font-size="6.0" text-anchor="end" fill="#2a2a2a" font-weight="normal" stroke="#2a2a2a" stroke-width="0.18">4</text>
<text x="750.5" y="101.2" font-family="Liberation Serif" font-size="5.75" text-anchor="start" fill="#2a2af0" font-weight="normal" stroke="#2a2af0" stroke-width="0.22">JF04</text>
<text x="744.1" y="244.6" font-family="Liberation Sans" font-size="6.0" text-anchor="end" fill="#2a2a2a" font-weight="normal" stroke="#2a2a2a" stroke-width="0.18">0.3O</text>
<text x="744.1" y="310.8" font-family="Liberation Sans" font-size="6.0" text-anchor="end" fill="#2a2a2a" font-weight="normal" stroke="#2a2a2a" stroke-width="0.18">0.3G</text>
<text x="744.6999999999999" y="452.0" font-family="Liberation Sans" font-size="6.0" text-anchor="end" fill="#2a2a2a" font-weight="normal" stroke="#2a2a2a" stroke-width="0.18">9</text>
<text x="750.5" y="452.0" font-family="Liberation Serif" font-size="5.75" text-anchor="start" fill="#2a2af0" font-weight="normal" stroke="#2a2af0" stroke-width="0.22">JF04</text>
</g>
<g filter="url(#soft2)">
<rect x="-10" y="543.0" width="1020" height="31" fill="#d4d0c8"/>
<line x1="-10" y1="543.9" x2="1010" y2="543.9" stroke="#eeebe5" stroke-width="1"/>
<rect x="4" y="546.3" width="44.6" height="15.700000000000045" fill="#d4d0c8"/>
<path d="M4,562.0 L4,546.3 L48.6,546.3" fill="none" stroke="#fff" stroke-width="1"/>
<path d="M4,562.0 L48.6,562.0 L48.6,546.3" fill="none" stroke="#404040" stroke-width="1.4"/>
<rect x="50.6" y="546.3" width="45.4" height="15.700000000000045" fill="#d4d0c8"/>
<path d="M50.6,562.0 L50.6,546.3 L96,546.3" fill="none" stroke="#fff" stroke-width="1"/>
<path d="M50.6,562.0 L96,562.0 L96,546.3" fill="none" stroke="#404040" stroke-width="1.4"/>
<rect x="97" y="546.3" width="43.80000000000001" height="15.700000000000045" fill="#fff"/>
<path d="M97,562.0 L97,546.3 L140.8,546.3" fill="none" stroke="#404040" stroke-width="1"/>
<path d="M97,562.0 L140.8,562.0 L140.8,546.3" fill="none" stroke="#fff" stroke-width="1"/>
<text x="21.6" y="557.4" font-family="Liberation Sans" font-size="9" fill="#222" textLength="16.8" lengthAdjust="spacingAndGlyphs">Shell</text>
<text x="68.8" y="557.4" font-family="Liberation Sans" font-size="9" fill="#222" textLength="21.6" lengthAdjust="spacingAndGlyphs">Hyu...</text>
<text x="114.4" y="557.4" font-family="Liberation Sans" font-size="9" font-weight="bold" fill="#111" textLength="24" lengthAdjust="spacingAndGlyphs">Glob...</text>
<ellipse cx="59.7" cy="553.7" rx="4.7" ry="2.8" fill="#2e2e2e" transform="rotate(-6 59.7 553.7)"/>
<path d="M58.1,555.1 L59.0,552.2 M60.6,555.2 L61.5,552.3 M58.400000000000006,553.9 L61.2,553.4" stroke="#fff" stroke-width="0.8" fill="none"/>
<ellipse cx="105.9" cy="553.7" rx="4.7" ry="2.8" fill="#2e2e2e" transform="rotate(-6 105.9 553.7)"/>
<path d="M104.30000000000001,555.1 L105.2,552.2 M106.80000000000001,555.2 L107.7,552.3 M104.60000000000001,553.9 L107.4,553.4" stroke="#fff" stroke-width="0.8" fill="none"/>
<path d="M954.4,561.8 L954.4,546.2 L997.6,546.2" fill="none" stroke="#888" stroke-width="0.9"/>
<path d="M954.4,561.8 L997.6,561.8 L997.6,546.2" fill="none" stroke="#fff" stroke-width="0.9"/>
<text x="960.4" y="557.4" font-family="Liberation Sans" font-size="9" fill="#222" textLength="19.2" lengthAdjust="spacingAndGlyphs">19:26</text>
<rect x="985.6" y="550.6" width="10.8" height="8.2" fill="#2f6fd0"/>
<rect x="985.6" y="550.6" width="10.8" height="2" fill="#5a8fe0"/>
<rect x="989" y="557" width="7" height="1.4" fill="#223"/>
</g>
</svg></body></html>
